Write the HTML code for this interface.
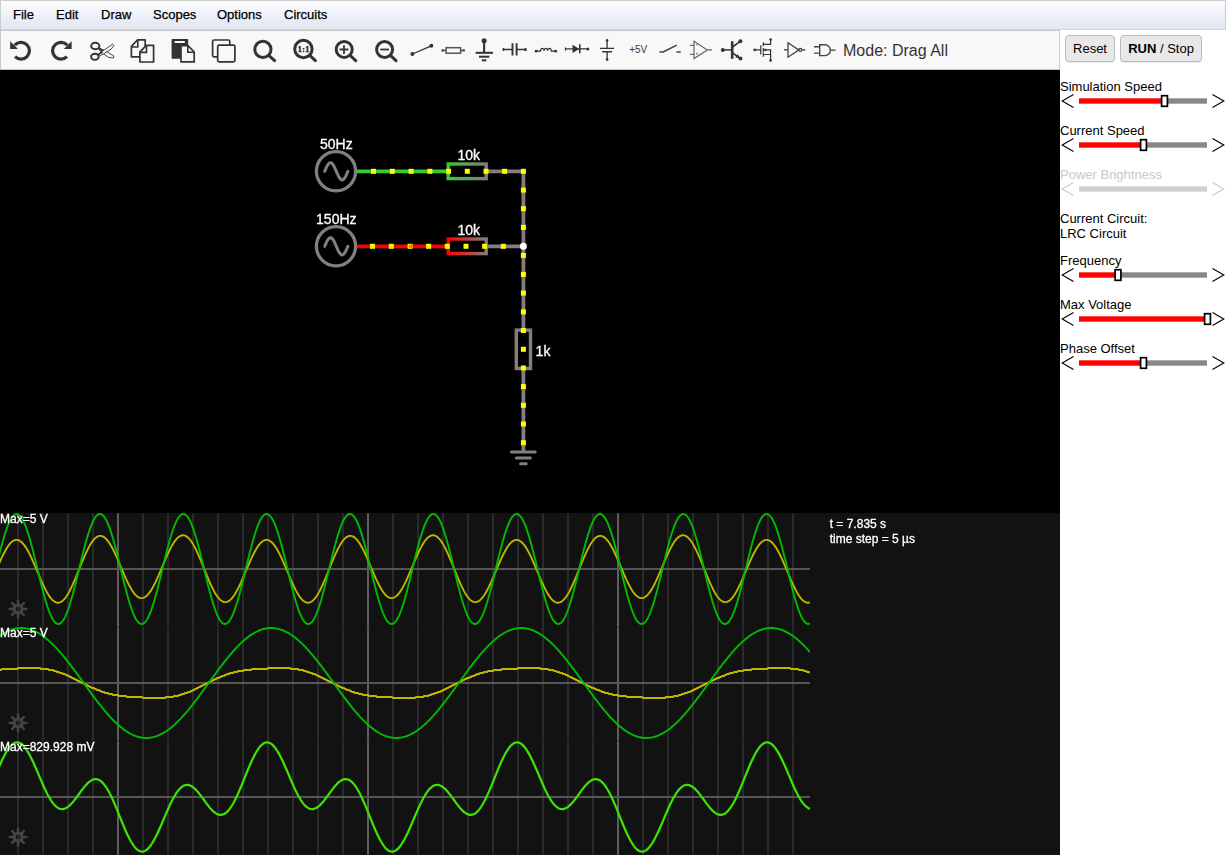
<!DOCTYPE html>
<html><head><meta charset="utf-8"><title>Circuit Simulator</title>
<style>
html,body{margin:0;padding:0;}
body{width:1226px;height:855px;overflow:hidden;background:#fff;position:relative;font-family:"Liberation Sans",Arial,sans-serif;font-size:13px;color:#000;}
.abs{position:absolute;}
#menubar{left:0;top:0;width:1224px;height:28px;border:1px solid #ccc;border-bottom-color:#d4d4d4;background:linear-gradient(#ffffff 0px,#f4f6fb 8px,#e6eaf4 22px,#e3e8f3 28px);}
.mi{position:absolute;top:7px;line-height:15px;font-size:13px;color:#000;white-space:nowrap;-webkit-text-stroke:0.25px #000;}
#toolbar{left:0;top:30px;width:1058px;height:38px;border:1px solid #c8c8c8;background:#f8f8f8;}
#tbsvg{left:0;top:30px;}
#mode{left:843px;top:42px;font-size:16px;line-height:18px;color:#333;white-space:nowrap;}
#cv{left:0;top:70px;will-change:transform;}
.btn{position:absolute;top:35px;height:25px;border:1px solid #bbb;border-radius:4px;background:#e8e8e8;font-size:13px;line-height:25px;text-align:center;color:#000;white-space:nowrap;box-shadow:0 1px 0 rgba(0,0,0,0.08);}
.lbl{position:absolute;left:1060px;font-size:13px;line-height:15px;white-space:nowrap;color:#000;}
.dis{color:#c8c8c8;}
</style></head><body>
<div id="menubar" class="abs"></div>
<div class="mi" style="left:13px">File</div>
<div class="mi" style="left:56px">Edit</div>
<div class="mi" style="left:101px">Draw</div>
<div class="mi" style="left:153px">Scopes</div>
<div class="mi" style="left:217px">Options</div>
<div class="mi" style="left:284px">Circuits</div>
<div id="toolbar" class="abs"></div>
<div id="mode" class="abs">Mode: Drag All</div>
<div class="btn" style="left:1065px;width:48px;">Reset</div>
<div class="btn" style="left:1120px;width:80px;"><b>RUN</b> / Stop</div>
<svg id="tbsvg" class="abs" width="1060" height="40" viewBox="0 30 1060 40">
<path d="M14.76 45.08 A8.4 8.4 0 1 1 15.06 56.64" fill="none" stroke="#333" stroke-width="3.2"/><path d="M10.2 41.3 L10.2 49.1 L18.0 49.1 Z" fill="#333"/>
<path d="M67.24 45.08 A8.4 8.4 0 1 0 66.94 56.64" fill="none" stroke="#333" stroke-width="3.2"/><path d="M71.6 41.3 L71.6 49.1 L63.8 49.1 Z" fill="#333"/>
<ellipse cx="95.3" cy="46" rx="4.1" ry="3.2" fill="none" stroke="#333" stroke-width="2"/><ellipse cx="94.9" cy="56.8" rx="3.8" ry="3" fill="none" stroke="#333" stroke-width="2"/><path d="M99 48 L104 50 L113.9 56.0 L113.6 58.0 L108.6 57.4 L100.4 51.6 Z" fill="#f8f8f8" stroke="#333" stroke-width="0.9" stroke-linejoin="round"/><path d="M98.4 54.4 L103.2 50.6 L112.6 44.2 L114.1 45.4 L111 49.2 L100.6 55.6 Z" fill="#f8f8f8" stroke="#333" stroke-width="0.9" stroke-linejoin="round"/><path d="M98.6 48.4 L103 51 M98.2 54.6 L102.5 52" stroke="#333" stroke-width="1.8"/>
<path d="M137.6 39.9 L145.2 39.9 L145.2 56.9 L131.4 56.9 L131.4 46.4 Z" fill="#f8f8f8" stroke="#333" stroke-width="1.7" stroke-linejoin="round"/><path d="M137.8 40.2 L137.8 47 L131.4 47" fill="none" stroke="#333" stroke-width="1.6"/><path d="M146.4 45.3 L153.6 45.3 L153.6 62 L139.9 62 L139.9 51.8 Z" fill="#f8f8f8" stroke="#333" stroke-width="1.7" stroke-linejoin="round"/><path d="M146.5 45.5 L146.5 52.4 L139.9 52.4" fill="none" stroke="#333" stroke-width="1.6"/>
<rect x="171.6" y="39" width="16.6" height="19.8" rx="0.8" fill="#333"/><rect x="174.6" y="41" width="10.2" height="2" fill="#f8f8f8"/><path d="M181 45.7 L188 45.7 L194.2 52 L194.2 61.9 L181 61.9 Z" fill="#f8f8f8" stroke="#333" stroke-width="1.7" stroke-linejoin="round"/><path d="M187.8 46 L187.8 52.2 L194 52.2" fill="none" stroke="#333" stroke-width="1.6"/>
<rect x="212.6" y="40" width="17.2" height="16.8" rx="1.6" fill="none" stroke="#333" stroke-width="1.7"/><rect x="217.7" y="45.2" width="17.2" height="16.6" rx="1.6" fill="#f8f8f8" stroke="#333" stroke-width="1.7"/>
<circle cx="262.9" cy="49.4" r="8.1" fill="none" stroke="#333" stroke-width="3"/><path d="M269.05 55.55 L274.6 60.6" stroke="#333" stroke-width="3" stroke-linecap="round"/>
<circle cx="303.4" cy="49.0" r="8.7" fill="none" stroke="#333" stroke-width="3"/><path d="M309.98 55.58 L315.4 60.6" stroke="#333" stroke-width="3" stroke-linecap="round"/><text x="303.4" y="52.2" font-family="Liberation Serif,serif" font-weight="bold" font-size="9" text-anchor="middle" fill="#222" stroke="#222" stroke-width="0.25">1:1</text>
<circle cx="344.2" cy="49.4" r="8.0" fill="none" stroke="#333" stroke-width="3"/><path d="M350.28 55.48 L355.7 60.6" stroke="#333" stroke-width="3" stroke-linecap="round"/><path d="M339.6 49.5 H348.4 M344 45.2 V53.9" stroke="#333" stroke-width="1.8"/>
<circle cx="384.6" cy="49.5" r="8.0" fill="none" stroke="#333" stroke-width="3"/><path d="M390.68 55.58 L396 60.6" stroke="#333" stroke-width="3" stroke-linecap="round"/><path d="M380.2 49.5 H389" stroke="#333" stroke-width="1.8"/>
<path d="M412.4 54 L431.3 45.8" stroke="#333" stroke-width="1.3"/><circle cx="412.4" cy="54" r="2" fill="#333"/><circle cx="431.3" cy="45.8" r="2" fill="#333"/>
<path d="M442.5 50.4 H446 M460.6 50.4 H463.8" stroke="#555" stroke-width="1.5"/><rect x="446.1" y="47.7" width="14.5" height="5.5" fill="none" stroke="#555" stroke-width="1.5"/><circle cx="442.6" cy="50.4" r="1.3" fill="#555"/><circle cx="463.7" cy="50.4" r="1.3" fill="#555"/>
<circle cx="484.1" cy="40.8" r="2.5" fill="#333"/><path d="M484.1 41 V52.6" stroke="#333" stroke-width="2.1"/><path d="M475.6 52.8 H493" stroke="#333" stroke-width="2"/><path d="M479 56.7 H489.4" stroke="#333" stroke-width="2"/><path d="M481.8 60.3 H486.4" stroke="#333" stroke-width="2"/>
<path d="M503.3 49.4 H512.4 M516.6 49.4 H525.4 M503.4 47.9 V50.9" stroke="#333" stroke-width="1.5"/><path d="M512.5 43.2 V55.6 M516.6 43.2 V55.6" stroke="#333" stroke-width="1.9"/><circle cx="525.5" cy="49.4" r="1.5" fill="#333"/>
<circle cx="536.1" cy="51.2" r="1.4" fill="#333"/><circle cx="555.7" cy="51.2" r="1.4" fill="#333"/><path d="M536.1 51.2 H540.5 Q540.7 48.4 542.3 48.4 Q543.9 48.4 544.1 50.6 Q544.3 48.4 545.9 48.4 Q547.5 48.4 547.7 50.6 Q547.9 48.4 549.5 48.4 Q551.1 48.4 551.3 51.2 H555.7" fill="none" stroke="#333" stroke-width="1.2"/>
<path d="M565.5 48.9 H587.6 M565.5 47.4 V50.4" stroke="#333" stroke-width="1.3"/><path d="M572.5 44.7 L579.3 48.9 L572.5 53.1 Z" fill="#333"/><path d="M579.8 44.3 V53.3" stroke="#333" stroke-width="1.6"/><circle cx="587.8" cy="48.9" r="1.5" fill="#333"/>
<path d="M607.1 40.3 V48.4 M607.1 51.7 V59.6" stroke="#333" stroke-width="1.3"/><path d="M600 48.4 H614.1 M602.2 51.7 H612" stroke="#333" stroke-width="1.4"/><circle cx="607.1" cy="40.4" r="1.3" fill="#333"/><circle cx="607.1" cy="59.6" r="1.3" fill="#333"/>
<text x="629.2" y="52.8" font-family="Liberation Sans,Arial,sans-serif" font-size="10" fill="#3a3a3a">+5V</text>
<path d="M659.4 52 H663.2 L676.8 45.2 M676.4 52 H680.8" fill="none" stroke="#444" stroke-width="1.5"/>
<path d="M694 41.2 L707.3 49.9 L694 58.6 Z M690 45.3 H694 M690 54.3 H694 M707.3 49.9 H712" fill="none" stroke="#666" stroke-width="1.2"/><path d="M696 44.8 H697.6 M696 53.6 H697.8 M696.9 52.7 V54.5" stroke="#555" stroke-width="0.7"/>
<circle cx="722.8" cy="49.9" r="2" fill="#333"/><path d="M722.8 49.9 H732" stroke="#333" stroke-width="1.5"/><path d="M732.2 41.2 V58.8" stroke="#333" stroke-width="2.6"/><path d="M732.6 47 L740.4 41.2 M732.6 52.8 L740.4 58.6" stroke="#333" stroke-width="1.6"/><circle cx="740.4" cy="41.2" r="2" fill="#333"/><circle cx="740.4" cy="58.6" r="2" fill="#333"/><path d="M739.4 57.9 L735.2 57.4 L737.8 53.9 Z" fill="#333"/>
<circle cx="754.7" cy="49.9" r="1.3" fill="#333"/><circle cx="770.6" cy="39.5" r="1.3" fill="#333"/><circle cx="770.6" cy="60.4" r="1.3" fill="#333"/><path d="M754.7 49.9 H760.8 M760.8 45.3 V54.5 M763.3 42.3 V46.3 M763.3 47.9 V51.9 M763.3 52.6 V56.8 M763.3 44.3 H770.6 V39.5 M763.3 54.5 H770.6 V60.4 M763.3 49.9 H770.6 V54.5" fill="none" stroke="#333" stroke-width="1.2"/><path d="M763.4 49.9 L766.2 48.3 L766.2 51.5 Z" fill="#333"/>
<path d="M784 49.9 H788 M788 42.8 L798.8 49.9 L788 57.2 Z M801.8 49.9 H805.4" fill="none" stroke="#333" stroke-width="1.2"/><circle cx="800.3" cy="49.9" r="1.5" fill="none" stroke="#333" stroke-width="1.1"/>
<path d="M814 46.8 H819.6 M814 53.1 H819.6 M819.7 44.8 H825 A5.4 5.4 0 0 1 825 55.6 H819.7 Z M830.4 50.1 H835.6" fill="none" stroke="#444" stroke-width="1.4"/>
</svg>
<svg id="cv" class="abs" width="1060" height="785" viewBox="0 70 1060 785">
<defs><linearGradient id="gg" x1="448" x2="486" y1="0" y2="0" gradientUnits="userSpaceOnUse"><stop offset="0" stop-color="#33cc33"/><stop offset="1" stop-color="#857c7c"/></linearGradient><linearGradient id="gr" x1="448" x2="486" y1="0" y2="0" gradientUnits="userSpaceOnUse"><stop offset="0" stop-color="#ff0000"/><stop offset="1" stop-color="#857c7c"/></linearGradient><clipPath id="c0"><rect x="0" y="513" width="810" height="114"/></clipPath><clipPath id="c1"><rect x="0" y="627" width="810" height="114"/></clipPath><clipPath id="c2"><rect x="0" y="741" width="810" height="114"/></clipPath></defs>
<rect x="0" y="70" width="1060" height="443" fill="#000"/>
<rect x="0" y="513" width="1060" height="342" fill="#121212"/>
<circle cx="336" cy="171.3" r="19.6" fill="none" stroke="#808080" stroke-width="3.3"/><polyline points="324.7,171.3 325.3,170.0 325.9,168.6 326.4,167.4 327.0,166.2 327.6,165.2 328.2,164.3 328.8,163.6 329.3,163.1 329.9,162.8 330.5,162.7 331.1,162.8 331.7,163.1 332.2,163.6 332.8,164.3 333.4,165.2 334.0,166.2 334.6,167.4 335.1,168.6 335.7,170.0 336.3,171.3 336.9,172.6 337.5,174.0 338.0,175.2 338.6,176.4 339.2,177.4 339.8,178.3 340.4,179.0 340.9,179.5 341.5,179.8 342.1,179.9 342.7,179.8 343.3,179.5 343.8,179.0 344.4,178.3 345.0,177.4 345.6,176.4 346.2,175.2 346.7,174.0 347.3,172.6 347.9,171.3" fill="none" stroke="#808080" stroke-width="3" stroke-linecap="round" stroke-linejoin="round"/><text x="336.3" y="148.7" font-family="Liberation Sans,Arial,sans-serif" stroke="#fff" stroke-width="0.3" font-size="14" fill="#fff" text-anchor="middle">50Hz</text><path d="M356.8 171.3 H448" stroke="#33cc33" stroke-width="3.8"/><rect x="448.2" y="164.0" width="38" height="14.6" fill="none" stroke="url(#gg)" stroke-width="3.4"/><path d="M487.8 171.3 H523.4" stroke="#857c7c" stroke-width="3.8"/><text x="468.7" y="159.9" font-family="Liberation Sans,Arial,sans-serif" stroke="#fff" stroke-width="0.3" font-size="14" fill="#fff" text-anchor="middle">10k</text>
<circle cx="336" cy="246.3" r="19.6" fill="none" stroke="#808080" stroke-width="3.3"/><polyline points="324.7,246.3 325.3,245.0 325.9,243.6 326.4,242.4 327.0,241.2 327.6,240.2 328.2,239.3 328.8,238.6 329.3,238.1 329.9,237.8 330.5,237.7 331.1,237.8 331.7,238.1 332.2,238.6 332.8,239.3 333.4,240.2 334.0,241.2 334.6,242.4 335.1,243.6 335.7,245.0 336.3,246.3 336.9,247.6 337.5,249.0 338.0,250.2 338.6,251.4 339.2,252.4 339.8,253.3 340.4,254.0 340.9,254.5 341.5,254.8 342.1,254.9 342.7,254.8 343.3,254.5 343.8,254.0 344.4,253.3 345.0,252.4 345.6,251.4 346.2,250.2 346.7,249.0 347.3,247.6 347.9,246.3" fill="none" stroke="#808080" stroke-width="3" stroke-linecap="round" stroke-linejoin="round"/><text x="336.3" y="223.7" font-family="Liberation Sans,Arial,sans-serif" stroke="#fff" stroke-width="0.3" font-size="14" fill="#fff" text-anchor="middle">150Hz</text><path d="M356.8 246.3 H448" stroke="#ff0000" stroke-width="3.8"/><rect x="448.2" y="239.0" width="38" height="14.6" fill="none" stroke="url(#gr)" stroke-width="3.4"/><path d="M487.8 246.3 H523.4" stroke="#857c7c" stroke-width="3.8"/><text x="468.7" y="234.9" font-family="Liberation Sans,Arial,sans-serif" stroke="#fff" stroke-width="0.3" font-size="14" fill="#fff" text-anchor="middle">10k</text>
<path d="M523.4 169.3 V330" stroke="#857c7c" stroke-width="3.8"/><rect x="516.3" y="330.1" width="14.2" height="38.4" fill="none" stroke="#857c7c" stroke-width="3.4"/><path d="M523.4 370 V452" stroke="#808080" stroke-width="3.8"/><path d="M511.4 452 H535.2 M516.4 458.1 H530.4 M520.6 463.8 H526.2" stroke="#808080" stroke-width="3" stroke-linecap="round"/><text x="535.6" y="355.8" font-family="Liberation Sans,Arial,sans-serif" stroke="#fff" stroke-width="0.3" font-size="14" fill="#fff">1k</text>
<rect x="371.0" y="168.8" width="5" height="5" fill="#ffff00"/><rect x="389.8" y="168.8" width="5" height="5" fill="#ffff00"/><rect x="408.6" y="168.8" width="5" height="5" fill="#ffff00"/><rect x="427.4" y="168.8" width="5" height="5" fill="#ffff00"/><rect x="446.1" y="168.8" width="5" height="5" fill="#ffff00"/><rect x="464.8" y="168.8" width="5" height="5" fill="#ffff00"/><rect x="483.5" y="168.8" width="5" height="5" fill="#ffff00"/><rect x="502.1" y="168.8" width="5" height="5" fill="#ffff00"/><rect x="520.9" y="168.8" width="5" height="5" fill="#ffff00"/><rect x="370.0" y="243.8" width="5" height="5" fill="#ffff00"/><rect x="388.8" y="243.8" width="5" height="5" fill="#ffff00"/><rect x="407.6" y="243.8" width="5" height="5" fill="#ffff00"/><rect x="426.1" y="243.8" width="5" height="5" fill="#ffff00"/><rect x="444.8" y="243.8" width="5" height="5" fill="#ffff00"/><rect x="463.5" y="243.8" width="5" height="5" fill="#ffff00"/><rect x="482.1" y="243.8" width="5" height="5" fill="#ffff00"/><rect x="500.8" y="243.8" width="5" height="5" fill="#ffff00"/><rect x="520.9" y="187.6" width="5" height="5" fill="#ffff00"/><rect x="520.9" y="206.2" width="5" height="5" fill="#ffff00"/><rect x="520.9" y="224.9" width="5" height="5" fill="#ffff00"/><rect x="520.9" y="252.9" width="5" height="5" fill="#ffff00"/><rect x="520.9" y="271.9" width="5" height="5" fill="#ffff00"/><rect x="520.9" y="290.6" width="5" height="5" fill="#ffff00"/><rect x="520.9" y="309.4" width="5" height="5" fill="#ffff00"/><rect x="520.9" y="328.0" width="5" height="5" fill="#ffff00"/><rect x="520.9" y="346.8" width="5" height="5" fill="#ffff00"/><rect x="520.9" y="365.5" width="5" height="5" fill="#ffff00"/><rect x="520.9" y="384.1" width="5" height="5" fill="#ffff00"/><rect x="520.9" y="402.8" width="5" height="5" fill="#ffff00"/><rect x="520.9" y="421.5" width="5" height="5" fill="#ffff00"/><rect x="520.9" y="440.2" width="5" height="5" fill="#ffff00"/><circle cx="410.6" cy="246.3" r="1.3" fill="none" stroke="#ff0000" stroke-width="0.9"/><circle cx="523.4" cy="246.3" r="3.5" fill="#fff"/>
<rect x="17" y="513.3" width="2" height="113.4" fill="#2a2a2a"/><rect x="42" y="513.3" width="2" height="113.4" fill="#2a2a2a"/><rect x="67" y="513.3" width="2" height="113.4" fill="#2a2a2a"/><rect x="92" y="513.3" width="2" height="113.4" fill="#2a2a2a"/><rect x="117" y="513.3" width="2" height="113.4" fill="#5e5e5e"/><rect x="142" y="513.3" width="2" height="113.4" fill="#2a2a2a"/><rect x="167" y="513.3" width="2" height="113.4" fill="#2a2a2a"/><rect x="192" y="513.3" width="2" height="113.4" fill="#2a2a2a"/><rect x="217" y="513.3" width="2" height="113.4" fill="#2a2a2a"/><rect x="242" y="513.3" width="2" height="113.4" fill="#2a2a2a"/><rect x="267" y="513.3" width="2" height="113.4" fill="#2a2a2a"/><rect x="292" y="513.3" width="2" height="113.4" fill="#2a2a2a"/><rect x="317" y="513.3" width="2" height="113.4" fill="#2a2a2a"/><rect x="342" y="513.3" width="2" height="113.4" fill="#2a2a2a"/><rect x="367" y="513.3" width="2" height="113.4" fill="#5e5e5e"/><rect x="392" y="513.3" width="2" height="113.4" fill="#2a2a2a"/><rect x="417" y="513.3" width="2" height="113.4" fill="#2a2a2a"/><rect x="442" y="513.3" width="2" height="113.4" fill="#2a2a2a"/><rect x="467" y="513.3" width="2" height="113.4" fill="#2a2a2a"/><rect x="492" y="513.3" width="2" height="113.4" fill="#2a2a2a"/><rect x="517" y="513.3" width="2" height="113.4" fill="#2a2a2a"/><rect x="542" y="513.3" width="2" height="113.4" fill="#2a2a2a"/><rect x="567" y="513.3" width="2" height="113.4" fill="#2a2a2a"/><rect x="592" y="513.3" width="2" height="113.4" fill="#2a2a2a"/><rect x="617" y="513.3" width="2" height="113.4" fill="#5e5e5e"/><rect x="642" y="513.3" width="2" height="113.4" fill="#2a2a2a"/><rect x="667" y="513.3" width="2" height="113.4" fill="#2a2a2a"/><rect x="692" y="513.3" width="2" height="113.4" fill="#2a2a2a"/><rect x="717" y="513.3" width="2" height="113.4" fill="#2a2a2a"/><rect x="742" y="513.3" width="2" height="113.4" fill="#2a2a2a"/><rect x="767" y="513.3" width="2" height="113.4" fill="#2a2a2a"/><rect x="792" y="513.3" width="2" height="113.4" fill="#2a2a2a"/><rect x="0" y="568" width="810" height="2" fill="#555"/>
<rect x="17" y="627.3" width="2" height="113.4" fill="#2a2a2a"/><rect x="42" y="627.3" width="2" height="113.4" fill="#2a2a2a"/><rect x="67" y="627.3" width="2" height="113.4" fill="#2a2a2a"/><rect x="92" y="627.3" width="2" height="113.4" fill="#2a2a2a"/><rect x="117" y="627.3" width="2" height="113.4" fill="#5e5e5e"/><rect x="142" y="627.3" width="2" height="113.4" fill="#2a2a2a"/><rect x="167" y="627.3" width="2" height="113.4" fill="#2a2a2a"/><rect x="192" y="627.3" width="2" height="113.4" fill="#2a2a2a"/><rect x="217" y="627.3" width="2" height="113.4" fill="#2a2a2a"/><rect x="242" y="627.3" width="2" height="113.4" fill="#2a2a2a"/><rect x="267" y="627.3" width="2" height="113.4" fill="#2a2a2a"/><rect x="292" y="627.3" width="2" height="113.4" fill="#2a2a2a"/><rect x="317" y="627.3" width="2" height="113.4" fill="#2a2a2a"/><rect x="342" y="627.3" width="2" height="113.4" fill="#2a2a2a"/><rect x="367" y="627.3" width="2" height="113.4" fill="#5e5e5e"/><rect x="392" y="627.3" width="2" height="113.4" fill="#2a2a2a"/><rect x="417" y="627.3" width="2" height="113.4" fill="#2a2a2a"/><rect x="442" y="627.3" width="2" height="113.4" fill="#2a2a2a"/><rect x="467" y="627.3" width="2" height="113.4" fill="#2a2a2a"/><rect x="492" y="627.3" width="2" height="113.4" fill="#2a2a2a"/><rect x="517" y="627.3" width="2" height="113.4" fill="#2a2a2a"/><rect x="542" y="627.3" width="2" height="113.4" fill="#2a2a2a"/><rect x="567" y="627.3" width="2" height="113.4" fill="#2a2a2a"/><rect x="592" y="627.3" width="2" height="113.4" fill="#2a2a2a"/><rect x="617" y="627.3" width="2" height="113.4" fill="#5e5e5e"/><rect x="642" y="627.3" width="2" height="113.4" fill="#2a2a2a"/><rect x="667" y="627.3" width="2" height="113.4" fill="#2a2a2a"/><rect x="692" y="627.3" width="2" height="113.4" fill="#2a2a2a"/><rect x="717" y="627.3" width="2" height="113.4" fill="#2a2a2a"/><rect x="742" y="627.3" width="2" height="113.4" fill="#2a2a2a"/><rect x="767" y="627.3" width="2" height="113.4" fill="#2a2a2a"/><rect x="792" y="627.3" width="2" height="113.4" fill="#2a2a2a"/><rect x="0" y="682" width="810" height="2" fill="#555"/>
<rect x="17" y="741.3" width="2" height="113.4" fill="#2a2a2a"/><rect x="42" y="741.3" width="2" height="113.4" fill="#2a2a2a"/><rect x="67" y="741.3" width="2" height="113.4" fill="#2a2a2a"/><rect x="92" y="741.3" width="2" height="113.4" fill="#2a2a2a"/><rect x="117" y="741.3" width="2" height="113.4" fill="#5e5e5e"/><rect x="142" y="741.3" width="2" height="113.4" fill="#2a2a2a"/><rect x="167" y="741.3" width="2" height="113.4" fill="#2a2a2a"/><rect x="192" y="741.3" width="2" height="113.4" fill="#2a2a2a"/><rect x="217" y="741.3" width="2" height="113.4" fill="#2a2a2a"/><rect x="242" y="741.3" width="2" height="113.4" fill="#2a2a2a"/><rect x="267" y="741.3" width="2" height="113.4" fill="#2a2a2a"/><rect x="292" y="741.3" width="2" height="113.4" fill="#2a2a2a"/><rect x="317" y="741.3" width="2" height="113.4" fill="#2a2a2a"/><rect x="342" y="741.3" width="2" height="113.4" fill="#2a2a2a"/><rect x="367" y="741.3" width="2" height="113.4" fill="#5e5e5e"/><rect x="392" y="741.3" width="2" height="113.4" fill="#2a2a2a"/><rect x="417" y="741.3" width="2" height="113.4" fill="#2a2a2a"/><rect x="442" y="741.3" width="2" height="113.4" fill="#2a2a2a"/><rect x="467" y="741.3" width="2" height="113.4" fill="#2a2a2a"/><rect x="492" y="741.3" width="2" height="113.4" fill="#2a2a2a"/><rect x="517" y="741.3" width="2" height="113.4" fill="#2a2a2a"/><rect x="542" y="741.3" width="2" height="113.4" fill="#2a2a2a"/><rect x="567" y="741.3" width="2" height="113.4" fill="#2a2a2a"/><rect x="592" y="741.3" width="2" height="113.4" fill="#2a2a2a"/><rect x="617" y="741.3" width="2" height="113.4" fill="#5e5e5e"/><rect x="642" y="741.3" width="2" height="113.4" fill="#2a2a2a"/><rect x="667" y="741.3" width="2" height="113.4" fill="#2a2a2a"/><rect x="692" y="741.3" width="2" height="113.4" fill="#2a2a2a"/><rect x="717" y="741.3" width="2" height="113.4" fill="#2a2a2a"/><rect x="742" y="741.3" width="2" height="113.4" fill="#2a2a2a"/><rect x="767" y="741.3" width="2" height="113.4" fill="#2a2a2a"/><rect x="792" y="741.3" width="2" height="113.4" fill="#2a2a2a"/><rect x="0" y="796" width="810" height="2" fill="#555"/>
<polyline clip-path="url(#c0)" points="-1.0,563.7 0.0,561.5 1.0,559.2 2.0,557.1 3.0,555.0 4.0,553.0 5.0,551.2 6.0,549.4 7.0,547.8 8.0,546.3 9.0,544.9 10.0,543.7 11.0,542.6 12.0,541.7 13.0,541.0 14.0,540.5 15.0,540.1 16.0,539.9 17.0,539.9 18.0,540.1 19.0,540.4 20.0,541.0 21.0,541.7 22.0,542.5 23.0,543.6 24.0,544.8 25.0,546.1 26.0,547.6 27.0,549.2 28.0,551.0 29.0,552.9 30.0,554.8 31.0,556.9 32.0,559.1 33.0,561.3 34.0,563.6 35.0,565.9 36.0,568.3 37.0,570.6 38.0,573.0 39.0,575.4 40.0,577.7 41.0,580.1 42.0,582.3 43.0,584.5 44.0,586.6 45.0,588.7 46.0,590.6 47.0,592.4 48.0,594.1 49.0,595.7 50.0,597.2 51.0,598.4 52.0,599.6 53.0,600.5 54.0,601.3 55.0,601.9 56.0,602.4 57.0,602.7 58.0,602.7 59.0,602.6 60.0,602.4 61.0,601.9 62.0,601.2 63.0,600.4 64.0,599.4 65.0,598.3 66.0,597.0 67.0,595.5 68.0,593.9 69.0,592.1 70.0,590.2 71.0,588.3 72.0,586.2 73.0,584.0 74.0,581.7 75.0,579.4 76.0,577.0 77.0,574.5 78.0,572.1 79.0,569.6 80.0,567.1 81.0,564.6 82.0,562.2 83.0,559.8 84.0,557.4 85.0,555.1 86.0,552.9 87.0,550.8 88.0,548.8 89.0,546.9 90.0,545.1 91.0,543.5 92.0,542.0 93.0,540.6 94.0,539.4 95.0,538.4 96.0,537.5 97.0,536.8 98.0,536.3 99.0,536.0 100.0,535.9 101.0,535.9 102.0,536.1 103.0,536.5 104.0,537.1 105.0,537.8 106.0,538.8 107.0,539.8 108.0,541.1 109.0,542.5 110.0,544.0 111.0,545.7 112.0,547.5 113.0,549.4 114.0,551.4 115.0,553.5 116.0,555.6 117.0,557.9 118.0,560.2 119.0,562.5 120.0,564.9 121.0,567.2 122.0,569.6 123.0,571.9 124.0,574.3 125.0,576.5 126.0,578.8 127.0,580.9 128.0,583.0 129.0,585.0 130.0,586.8 131.0,588.6 132.0,590.2 133.0,591.7 134.0,593.1 135.0,594.3 136.0,595.4 137.0,596.3 138.0,597.0 139.0,597.5 140.0,597.9 141.0,598.1 142.0,598.1 143.0,597.9 144.0,597.6 145.0,597.0 146.0,596.3 147.0,595.5 148.0,594.4 149.0,593.2 150.0,591.9 151.0,590.4 152.0,588.8 153.0,587.0 154.0,585.1 155.0,583.2 156.0,581.1 157.0,578.9 158.0,576.7 159.0,574.4 160.0,572.1 161.0,569.7 162.0,567.4 163.0,565.0 164.0,562.6 165.0,560.3 166.0,557.9 167.0,555.7 168.0,553.5 169.0,551.4 170.0,549.3 171.0,547.4 172.0,545.6 173.0,543.9 174.0,542.3 175.0,540.8 176.0,539.6 177.0,538.4 178.0,537.5 179.0,536.7 180.0,536.1 181.0,535.6 182.0,535.3 183.0,535.3 184.0,535.4 185.0,535.6 186.0,536.1 187.0,536.8 188.0,537.6 189.0,538.6 190.0,539.7 191.0,541.0 192.0,542.5 193.0,544.1 194.0,545.9 195.0,547.8 196.0,549.7 197.0,551.8 198.0,554.0 199.0,556.3 200.0,558.6 201.0,561.0 202.0,563.5 203.0,565.9 204.0,568.4 205.0,570.9 206.0,573.4 207.0,575.8 208.0,578.2 209.0,580.6 210.0,582.9 211.0,585.1 212.0,587.2 213.0,589.2 214.0,591.1 215.0,592.9 216.0,594.5 217.0,596.0 218.0,597.4 219.0,598.6 220.0,599.6 221.0,600.5 222.0,601.2 223.0,601.7 224.0,602.0 225.0,602.1 226.0,602.1 227.0,601.9 228.0,601.5 229.0,600.9 230.0,600.2 231.0,599.2 232.0,598.2 233.0,596.9 234.0,595.5 235.0,594.0 236.0,592.3 237.0,590.5 238.0,588.6 239.0,586.6 240.0,584.5 241.0,582.4 242.0,580.1 243.0,577.8 244.0,575.5 245.0,573.1 246.0,570.8 247.0,568.4 248.0,566.1 249.0,563.7 250.0,561.5 251.0,559.2 252.0,557.1 253.0,555.0 254.0,553.0 255.0,551.2 256.0,549.4 257.0,547.8 258.0,546.3 259.0,544.9 260.0,543.7 261.0,542.6 262.0,541.7 263.0,541.0 264.0,540.5 265.0,540.1 266.0,539.9 267.0,539.9 268.0,540.1 269.0,540.4 270.0,541.0 271.0,541.7 272.0,542.5 273.0,543.6 274.0,544.8 275.0,546.1 276.0,547.6 277.0,549.2 278.0,551.0 279.0,552.9 280.0,554.8 281.0,556.9 282.0,559.1 283.0,561.3 284.0,563.6 285.0,565.9 286.0,568.3 287.0,570.6 288.0,573.0 289.0,575.4 290.0,577.7 291.0,580.1 292.0,582.3 293.0,584.5 294.0,586.6 295.0,588.7 296.0,590.6 297.0,592.4 298.0,594.1 299.0,595.7 300.0,597.2 301.0,598.4 302.0,599.6 303.0,600.5 304.0,601.3 305.0,601.9 306.0,602.4 307.0,602.7 308.0,602.7 309.0,602.6 310.0,602.4 311.0,601.9 312.0,601.2 313.0,600.4 314.0,599.4 315.0,598.3 316.0,597.0 317.0,595.5 318.0,593.9 319.0,592.1 320.0,590.2 321.0,588.3 322.0,586.2 323.0,584.0 324.0,581.7 325.0,579.4 326.0,577.0 327.0,574.5 328.0,572.1 329.0,569.6 330.0,567.1 331.0,564.6 332.0,562.2 333.0,559.8 334.0,557.4 335.0,555.1 336.0,552.9 337.0,550.8 338.0,548.8 339.0,546.9 340.0,545.1 341.0,543.5 342.0,542.0 343.0,540.6 344.0,539.4 345.0,538.4 346.0,537.5 347.0,536.8 348.0,536.3 349.0,536.0 350.0,535.9 351.0,535.9 352.0,536.1 353.0,536.5 354.0,537.1 355.0,537.8 356.0,538.8 357.0,539.8 358.0,541.1 359.0,542.5 360.0,544.0 361.0,545.7 362.0,547.5 363.0,549.4 364.0,551.4 365.0,553.5 366.0,555.6 367.0,557.9 368.0,560.2 369.0,562.5 370.0,564.9 371.0,567.2 372.0,569.6 373.0,571.9 374.0,574.3 375.0,576.5 376.0,578.8 377.0,580.9 378.0,583.0 379.0,585.0 380.0,586.8 381.0,588.6 382.0,590.2 383.0,591.7 384.0,593.1 385.0,594.3 386.0,595.4 387.0,596.3 388.0,597.0 389.0,597.5 390.0,597.9 391.0,598.1 392.0,598.1 393.0,597.9 394.0,597.6 395.0,597.0 396.0,596.3 397.0,595.5 398.0,594.4 399.0,593.2 400.0,591.9 401.0,590.4 402.0,588.8 403.0,587.0 404.0,585.1 405.0,583.2 406.0,581.1 407.0,578.9 408.0,576.7 409.0,574.4 410.0,572.1 411.0,569.7 412.0,567.4 413.0,565.0 414.0,562.6 415.0,560.3 416.0,557.9 417.0,555.7 418.0,553.5 419.0,551.4 420.0,549.3 421.0,547.4 422.0,545.6 423.0,543.9 424.0,542.3 425.0,540.8 426.0,539.6 427.0,538.4 428.0,537.5 429.0,536.7 430.0,536.1 431.0,535.6 432.0,535.3 433.0,535.3 434.0,535.4 435.0,535.6 436.0,536.1 437.0,536.8 438.0,537.6 439.0,538.6 440.0,539.7 441.0,541.0 442.0,542.5 443.0,544.1 444.0,545.9 445.0,547.8 446.0,549.7 447.0,551.8 448.0,554.0 449.0,556.3 450.0,558.6 451.0,561.0 452.0,563.5 453.0,565.9 454.0,568.4 455.0,570.9 456.0,573.4 457.0,575.8 458.0,578.2 459.0,580.6 460.0,582.9 461.0,585.1 462.0,587.2 463.0,589.2 464.0,591.1 465.0,592.9 466.0,594.5 467.0,596.0 468.0,597.4 469.0,598.6 470.0,599.6 471.0,600.5 472.0,601.2 473.0,601.7 474.0,602.0 475.0,602.1 476.0,602.1 477.0,601.9 478.0,601.5 479.0,600.9 480.0,600.2 481.0,599.2 482.0,598.2 483.0,596.9 484.0,595.5 485.0,594.0 486.0,592.3 487.0,590.5 488.0,588.6 489.0,586.6 490.0,584.5 491.0,582.4 492.0,580.1 493.0,577.8 494.0,575.5 495.0,573.1 496.0,570.8 497.0,568.4 498.0,566.1 499.0,563.7 500.0,561.5 501.0,559.2 502.0,557.1 503.0,555.0 504.0,553.0 505.0,551.2 506.0,549.4 507.0,547.8 508.0,546.3 509.0,544.9 510.0,543.7 511.0,542.6 512.0,541.7 513.0,541.0 514.0,540.5 515.0,540.1 516.0,539.9 517.0,539.9 518.0,540.1 519.0,540.4 520.0,541.0 521.0,541.7 522.0,542.5 523.0,543.6 524.0,544.8 525.0,546.1 526.0,547.6 527.0,549.2 528.0,551.0 529.0,552.9 530.0,554.8 531.0,556.9 532.0,559.1 533.0,561.3 534.0,563.6 535.0,565.9 536.0,568.3 537.0,570.6 538.0,573.0 539.0,575.4 540.0,577.7 541.0,580.1 542.0,582.3 543.0,584.5 544.0,586.6 545.0,588.7 546.0,590.6 547.0,592.4 548.0,594.1 549.0,595.7 550.0,597.2 551.0,598.4 552.0,599.6 553.0,600.5 554.0,601.3 555.0,601.9 556.0,602.4 557.0,602.7 558.0,602.7 559.0,602.6 560.0,602.4 561.0,601.9 562.0,601.2 563.0,600.4 564.0,599.4 565.0,598.3 566.0,597.0 567.0,595.5 568.0,593.9 569.0,592.1 570.0,590.2 571.0,588.3 572.0,586.2 573.0,584.0 574.0,581.7 575.0,579.4 576.0,577.0 577.0,574.5 578.0,572.1 579.0,569.6 580.0,567.1 581.0,564.6 582.0,562.2 583.0,559.8 584.0,557.4 585.0,555.1 586.0,552.9 587.0,550.8 588.0,548.8 589.0,546.9 590.0,545.1 591.0,543.5 592.0,542.0 593.0,540.6 594.0,539.4 595.0,538.4 596.0,537.5 597.0,536.8 598.0,536.3 599.0,536.0 600.0,535.9 601.0,535.9 602.0,536.1 603.0,536.5 604.0,537.1 605.0,537.8 606.0,538.8 607.0,539.8 608.0,541.1 609.0,542.5 610.0,544.0 611.0,545.7 612.0,547.5 613.0,549.4 614.0,551.4 615.0,553.5 616.0,555.6 617.0,557.9 618.0,560.2 619.0,562.5 620.0,564.9 621.0,567.2 622.0,569.6 623.0,571.9 624.0,574.3 625.0,576.5 626.0,578.8 627.0,580.9 628.0,583.0 629.0,585.0 630.0,586.8 631.0,588.6 632.0,590.2 633.0,591.7 634.0,593.1 635.0,594.3 636.0,595.4 637.0,596.3 638.0,597.0 639.0,597.5 640.0,597.9 641.0,598.1 642.0,598.1 643.0,597.9 644.0,597.6 645.0,597.0 646.0,596.3 647.0,595.5 648.0,594.4 649.0,593.2 650.0,591.9 651.0,590.4 652.0,588.8 653.0,587.0 654.0,585.1 655.0,583.2 656.0,581.1 657.0,578.9 658.0,576.7 659.0,574.4 660.0,572.1 661.0,569.7 662.0,567.4 663.0,565.0 664.0,562.6 665.0,560.3 666.0,557.9 667.0,555.7 668.0,553.5 669.0,551.4 670.0,549.3 671.0,547.4 672.0,545.6 673.0,543.9 674.0,542.3 675.0,540.8 676.0,539.6 677.0,538.4 678.0,537.5 679.0,536.7 680.0,536.1 681.0,535.6 682.0,535.3 683.0,535.3 684.0,535.4 685.0,535.6 686.0,536.1 687.0,536.8 688.0,537.6 689.0,538.6 690.0,539.7 691.0,541.0 692.0,542.5 693.0,544.1 694.0,545.9 695.0,547.8 696.0,549.7 697.0,551.8 698.0,554.0 699.0,556.3 700.0,558.6 701.0,561.0 702.0,563.5 703.0,565.9 704.0,568.4 705.0,570.9 706.0,573.4 707.0,575.8 708.0,578.2 709.0,580.6 710.0,582.9 711.0,585.1 712.0,587.2 713.0,589.2 714.0,591.1 715.0,592.9 716.0,594.5 717.0,596.0 718.0,597.4 719.0,598.6 720.0,599.6 721.0,600.5 722.0,601.2 723.0,601.7 724.0,602.0 725.0,602.1 726.0,602.1 727.0,601.9 728.0,601.5 729.0,600.9 730.0,600.2 731.0,599.2 732.0,598.2 733.0,596.9 734.0,595.5 735.0,594.0 736.0,592.3 737.0,590.5 738.0,588.6 739.0,586.6 740.0,584.5 741.0,582.4 742.0,580.1 743.0,577.8 744.0,575.5 745.0,573.1 746.0,570.8 747.0,568.4 748.0,566.1 749.0,563.7 750.0,561.5 751.0,559.2 752.0,557.1 753.0,555.0 754.0,553.0 755.0,551.2 756.0,549.4 757.0,547.8 758.0,546.3 759.0,544.9 760.0,543.7 761.0,542.6 762.0,541.7 763.0,541.0 764.0,540.5 765.0,540.1 766.0,539.9 767.0,539.9 768.0,540.1 769.0,540.4 770.0,541.0 771.0,541.7 772.0,542.5 773.0,543.6 774.0,544.8 775.0,546.1 776.0,547.6 777.0,549.2 778.0,551.0 779.0,552.9 780.0,554.8 781.0,556.9 782.0,559.1 783.0,561.3 784.0,563.6 785.0,565.9 786.0,568.3 787.0,570.6 788.0,573.0 789.0,575.4 790.0,577.7 791.0,580.1 792.0,582.3 793.0,584.5 794.0,586.6 795.0,588.7 796.0,590.6 797.0,592.4 798.0,594.1 799.0,595.7 800.0,597.2 801.0,598.4 802.0,599.6 803.0,600.5 804.0,601.3 805.0,601.9 806.0,602.4 807.0,602.7 808.0,602.7 809.0,602.6 810.0,602.4" fill="none" stroke="#beb600" stroke-width="1.9" stroke-linejoin="round"/>
<polyline clip-path="url(#c0)" points="-1.0,555.7 0.0,551.7 1.0,547.9 2.0,544.1 3.0,540.5 4.0,537.0 5.0,533.7 6.0,530.7 7.0,527.8 8.0,525.2 9.0,522.8 10.0,520.7 11.0,518.8 12.0,517.3 13.0,516.0 14.0,515.1 15.0,514.4 16.0,514.1 17.0,514.0 18.0,514.3 19.0,514.9 20.0,515.8 21.0,517.0 22.0,518.5 23.0,520.3 24.0,522.3 25.0,524.7 26.0,527.2 27.0,530.1 28.0,533.1 29.0,536.3 30.0,539.8 31.0,543.4 32.0,547.1 33.0,551.0 34.0,554.9 35.0,559.0 36.0,563.1 37.0,567.2 38.0,571.3 39.0,575.5 40.0,579.6 41.0,583.6 42.0,587.6 43.0,591.4 44.0,595.1 45.0,598.7 46.0,602.1 47.0,605.3 48.0,608.3 49.0,611.1 50.0,613.7 51.0,615.9 52.0,618.0 53.0,619.7 54.0,621.2 55.0,622.3 56.0,623.2 57.0,623.7 58.0,624.0 59.0,623.9 60.0,623.5 61.0,622.8 62.0,621.8 63.0,620.5 64.0,618.9 65.0,617.1 66.0,614.9 67.0,612.5 68.0,609.8 69.0,607.0 70.0,603.8 71.0,600.5 72.0,597.1 73.0,593.4 74.0,589.6 75.0,585.7 76.0,581.7 77.0,577.7 78.0,573.6 79.0,569.4 80.0,565.3 81.0,561.1 82.0,557.1 83.0,553.1 84.0,549.1 85.0,545.3 86.0,541.7 87.0,538.1 88.0,534.8 89.0,531.7 90.0,528.7 91.0,526.0 92.0,523.5 93.0,521.3 94.0,519.4 95.0,517.8 96.0,516.4 97.0,515.3 98.0,514.6 99.0,514.1 100.0,514.0 101.0,514.2 102.0,514.7 103.0,515.5 104.0,516.6 105.0,518.0 106.0,519.7 107.0,521.6 108.0,523.9 109.0,526.4 110.0,529.1 111.0,532.1 112.0,535.2 113.0,538.6 114.0,542.1 115.0,545.8 116.0,549.7 117.0,553.6 118.0,557.6 119.0,561.7 120.0,565.8 121.0,570.0 122.0,574.1 123.0,578.2 124.0,582.3 125.0,586.3 126.0,590.1 127.0,593.9 128.0,597.5 129.0,601.0 130.0,604.3 131.0,607.3 132.0,610.2 133.0,612.8 134.0,615.2 135.0,617.3 136.0,619.2 137.0,620.7 138.0,622.0 139.0,622.9 140.0,623.6 141.0,623.9 142.0,624.0 143.0,623.7 144.0,623.1 145.0,622.2 146.0,621.0 147.0,619.5 148.0,617.7 149.0,615.7 150.0,613.3 151.0,610.8 152.0,607.9 153.0,604.9 154.0,601.7 155.0,598.2 156.0,594.6 157.0,590.9 158.0,587.0 159.0,583.1 160.0,579.0 161.0,574.9 162.0,570.8 163.0,566.7 164.0,562.5 165.0,558.4 166.0,554.4 167.0,550.4 168.0,546.6 169.0,542.9 170.0,539.3 171.0,535.9 172.0,532.7 173.0,529.7 174.0,526.9 175.0,524.3 176.0,522.1 177.0,520.0 178.0,518.3 179.0,516.8 180.0,515.7 181.0,514.8 182.0,514.3 183.0,514.0 184.0,514.1 185.0,514.5 186.0,515.2 187.0,516.2 188.0,517.5 189.0,519.1 190.0,520.9 191.0,523.1 192.0,525.5 193.0,528.2 194.0,531.0 195.0,534.2 196.0,537.5 197.0,540.9 198.0,544.6 199.0,548.4 200.0,552.3 201.0,556.3 202.0,560.3 203.0,564.4 204.0,568.6 205.0,572.7 206.0,576.9 207.0,580.9 208.0,584.9 209.0,588.9 210.0,592.7 211.0,596.3 212.0,599.9 213.0,603.2 214.0,606.3 215.0,609.3 216.0,612.0 217.0,614.5 218.0,616.7 219.0,618.6 220.0,620.2 221.0,621.6 222.0,622.7 223.0,623.4 224.0,623.9 225.0,624.0 226.0,623.8 227.0,623.3 228.0,622.5 229.0,621.4 230.0,620.0 231.0,618.3 232.0,616.4 233.0,614.1 234.0,611.6 235.0,608.9 236.0,605.9 237.0,602.8 238.0,599.4 239.0,595.9 240.0,592.2 241.0,588.3 242.0,584.4 243.0,580.4 244.0,576.3 245.0,572.2 246.0,568.0 247.0,563.9 248.0,559.8 249.0,555.7 250.0,551.7 251.0,547.9 252.0,544.1 253.0,540.5 254.0,537.0 255.0,533.7 256.0,530.7 257.0,527.8 258.0,525.2 259.0,522.8 260.0,520.7 261.0,518.8 262.0,517.3 263.0,516.0 264.0,515.1 265.0,514.4 266.0,514.1 267.0,514.0 268.0,514.3 269.0,514.9 270.0,515.8 271.0,517.0 272.0,518.5 273.0,520.3 274.0,522.3 275.0,524.7 276.0,527.2 277.0,530.1 278.0,533.1 279.0,536.3 280.0,539.8 281.0,543.4 282.0,547.1 283.0,551.0 284.0,554.9 285.0,559.0 286.0,563.1 287.0,567.2 288.0,571.3 289.0,575.5 290.0,579.6 291.0,583.6 292.0,587.6 293.0,591.4 294.0,595.1 295.0,598.7 296.0,602.1 297.0,605.3 298.0,608.3 299.0,611.1 300.0,613.7 301.0,615.9 302.0,618.0 303.0,619.7 304.0,621.2 305.0,622.3 306.0,623.2 307.0,623.7 308.0,624.0 309.0,623.9 310.0,623.5 311.0,622.8 312.0,621.8 313.0,620.5 314.0,618.9 315.0,617.1 316.0,614.9 317.0,612.5 318.0,609.8 319.0,607.0 320.0,603.8 321.0,600.5 322.0,597.1 323.0,593.4 324.0,589.6 325.0,585.7 326.0,581.7 327.0,577.7 328.0,573.6 329.0,569.4 330.0,565.3 331.0,561.1 332.0,557.1 333.0,553.1 334.0,549.1 335.0,545.3 336.0,541.7 337.0,538.1 338.0,534.8 339.0,531.7 340.0,528.7 341.0,526.0 342.0,523.5 343.0,521.3 344.0,519.4 345.0,517.8 346.0,516.4 347.0,515.3 348.0,514.6 349.0,514.1 350.0,514.0 351.0,514.2 352.0,514.7 353.0,515.5 354.0,516.6 355.0,518.0 356.0,519.7 357.0,521.6 358.0,523.9 359.0,526.4 360.0,529.1 361.0,532.1 362.0,535.2 363.0,538.6 364.0,542.1 365.0,545.8 366.0,549.7 367.0,553.6 368.0,557.6 369.0,561.7 370.0,565.8 371.0,570.0 372.0,574.1 373.0,578.2 374.0,582.3 375.0,586.3 376.0,590.1 377.0,593.9 378.0,597.5 379.0,601.0 380.0,604.3 381.0,607.3 382.0,610.2 383.0,612.8 384.0,615.2 385.0,617.3 386.0,619.2 387.0,620.7 388.0,622.0 389.0,622.9 390.0,623.6 391.0,623.9 392.0,624.0 393.0,623.7 394.0,623.1 395.0,622.2 396.0,621.0 397.0,619.5 398.0,617.7 399.0,615.7 400.0,613.3 401.0,610.8 402.0,607.9 403.0,604.9 404.0,601.7 405.0,598.2 406.0,594.6 407.0,590.9 408.0,587.0 409.0,583.1 410.0,579.0 411.0,574.9 412.0,570.8 413.0,566.7 414.0,562.5 415.0,558.4 416.0,554.4 417.0,550.4 418.0,546.6 419.0,542.9 420.0,539.3 421.0,535.9 422.0,532.7 423.0,529.7 424.0,526.9 425.0,524.3 426.0,522.1 427.0,520.0 428.0,518.3 429.0,516.8 430.0,515.7 431.0,514.8 432.0,514.3 433.0,514.0 434.0,514.1 435.0,514.5 436.0,515.2 437.0,516.2 438.0,517.5 439.0,519.1 440.0,520.9 441.0,523.1 442.0,525.5 443.0,528.2 444.0,531.0 445.0,534.2 446.0,537.5 447.0,540.9 448.0,544.6 449.0,548.4 450.0,552.3 451.0,556.3 452.0,560.3 453.0,564.4 454.0,568.6 455.0,572.7 456.0,576.9 457.0,580.9 458.0,584.9 459.0,588.9 460.0,592.7 461.0,596.3 462.0,599.9 463.0,603.2 464.0,606.3 465.0,609.3 466.0,612.0 467.0,614.5 468.0,616.7 469.0,618.6 470.0,620.2 471.0,621.6 472.0,622.7 473.0,623.4 474.0,623.9 475.0,624.0 476.0,623.8 477.0,623.3 478.0,622.5 479.0,621.4 480.0,620.0 481.0,618.3 482.0,616.4 483.0,614.1 484.0,611.6 485.0,608.9 486.0,605.9 487.0,602.8 488.0,599.4 489.0,595.9 490.0,592.2 491.0,588.3 492.0,584.4 493.0,580.4 494.0,576.3 495.0,572.2 496.0,568.0 497.0,563.9 498.0,559.8 499.0,555.7 500.0,551.7 501.0,547.9 502.0,544.1 503.0,540.5 504.0,537.0 505.0,533.7 506.0,530.7 507.0,527.8 508.0,525.2 509.0,522.8 510.0,520.7 511.0,518.8 512.0,517.3 513.0,516.0 514.0,515.1 515.0,514.4 516.0,514.1 517.0,514.0 518.0,514.3 519.0,514.9 520.0,515.8 521.0,517.0 522.0,518.5 523.0,520.3 524.0,522.3 525.0,524.7 526.0,527.2 527.0,530.1 528.0,533.1 529.0,536.3 530.0,539.8 531.0,543.4 532.0,547.1 533.0,551.0 534.0,554.9 535.0,559.0 536.0,563.1 537.0,567.2 538.0,571.3 539.0,575.5 540.0,579.6 541.0,583.6 542.0,587.6 543.0,591.4 544.0,595.1 545.0,598.7 546.0,602.1 547.0,605.3 548.0,608.3 549.0,611.1 550.0,613.7 551.0,615.9 552.0,618.0 553.0,619.7 554.0,621.2 555.0,622.3 556.0,623.2 557.0,623.7 558.0,624.0 559.0,623.9 560.0,623.5 561.0,622.8 562.0,621.8 563.0,620.5 564.0,618.9 565.0,617.1 566.0,614.9 567.0,612.5 568.0,609.8 569.0,607.0 570.0,603.8 571.0,600.5 572.0,597.1 573.0,593.4 574.0,589.6 575.0,585.7 576.0,581.7 577.0,577.7 578.0,573.6 579.0,569.4 580.0,565.3 581.0,561.1 582.0,557.1 583.0,553.1 584.0,549.1 585.0,545.3 586.0,541.7 587.0,538.1 588.0,534.8 589.0,531.7 590.0,528.7 591.0,526.0 592.0,523.5 593.0,521.3 594.0,519.4 595.0,517.8 596.0,516.4 597.0,515.3 598.0,514.6 599.0,514.1 600.0,514.0 601.0,514.2 602.0,514.7 603.0,515.5 604.0,516.6 605.0,518.0 606.0,519.7 607.0,521.6 608.0,523.9 609.0,526.4 610.0,529.1 611.0,532.1 612.0,535.2 613.0,538.6 614.0,542.1 615.0,545.8 616.0,549.7 617.0,553.6 618.0,557.6 619.0,561.7 620.0,565.8 621.0,570.0 622.0,574.1 623.0,578.2 624.0,582.3 625.0,586.3 626.0,590.1 627.0,593.9 628.0,597.5 629.0,601.0 630.0,604.3 631.0,607.3 632.0,610.2 633.0,612.8 634.0,615.2 635.0,617.3 636.0,619.2 637.0,620.7 638.0,622.0 639.0,622.9 640.0,623.6 641.0,623.9 642.0,624.0 643.0,623.7 644.0,623.1 645.0,622.2 646.0,621.0 647.0,619.5 648.0,617.7 649.0,615.7 650.0,613.3 651.0,610.8 652.0,607.9 653.0,604.9 654.0,601.7 655.0,598.2 656.0,594.6 657.0,590.9 658.0,587.0 659.0,583.1 660.0,579.0 661.0,574.9 662.0,570.8 663.0,566.7 664.0,562.5 665.0,558.4 666.0,554.4 667.0,550.4 668.0,546.6 669.0,542.9 670.0,539.3 671.0,535.9 672.0,532.7 673.0,529.7 674.0,526.9 675.0,524.3 676.0,522.1 677.0,520.0 678.0,518.3 679.0,516.8 680.0,515.7 681.0,514.8 682.0,514.3 683.0,514.0 684.0,514.1 685.0,514.5 686.0,515.2 687.0,516.2 688.0,517.5 689.0,519.1 690.0,520.9 691.0,523.1 692.0,525.5 693.0,528.2 694.0,531.0 695.0,534.2 696.0,537.5 697.0,540.9 698.0,544.6 699.0,548.4 700.0,552.3 701.0,556.3 702.0,560.3 703.0,564.4 704.0,568.6 705.0,572.7 706.0,576.9 707.0,580.9 708.0,584.9 709.0,588.9 710.0,592.7 711.0,596.3 712.0,599.9 713.0,603.2 714.0,606.3 715.0,609.3 716.0,612.0 717.0,614.5 718.0,616.7 719.0,618.6 720.0,620.2 721.0,621.6 722.0,622.7 723.0,623.4 724.0,623.9 725.0,624.0 726.0,623.8 727.0,623.3 728.0,622.5 729.0,621.4 730.0,620.0 731.0,618.3 732.0,616.4 733.0,614.1 734.0,611.6 735.0,608.9 736.0,605.9 737.0,602.8 738.0,599.4 739.0,595.9 740.0,592.2 741.0,588.3 742.0,584.4 743.0,580.4 744.0,576.3 745.0,572.2 746.0,568.0 747.0,563.9 748.0,559.8 749.0,555.7 750.0,551.7 751.0,547.9 752.0,544.1 753.0,540.5 754.0,537.0 755.0,533.7 756.0,530.7 757.0,527.8 758.0,525.2 759.0,522.8 760.0,520.7 761.0,518.8 762.0,517.3 763.0,516.0 764.0,515.1 765.0,514.4 766.0,514.1 767.0,514.0 768.0,514.3 769.0,514.9 770.0,515.8 771.0,517.0 772.0,518.5 773.0,520.3 774.0,522.3 775.0,524.7 776.0,527.2 777.0,530.1 778.0,533.1 779.0,536.3 780.0,539.8 781.0,543.4 782.0,547.1 783.0,551.0 784.0,554.9 785.0,559.0 786.0,563.1 787.0,567.2 788.0,571.3 789.0,575.5 790.0,579.6 791.0,583.6 792.0,587.6 793.0,591.4 794.0,595.1 795.0,598.7 796.0,602.1 797.0,605.3 798.0,608.3 799.0,611.1 800.0,613.7 801.0,615.9 802.0,618.0 803.0,619.7 804.0,621.2 805.0,622.3 806.0,623.2 807.0,623.7 808.0,624.0 809.0,623.9 810.0,623.5" fill="none" stroke="#00bb00" stroke-width="1.9" stroke-linejoin="round"/>
<polyline clip-path="url(#c1)" points="-1.0,670.0 0.0,670.0 1.0,670.0 2.0,669.0 3.0,669.0 4.0,669.0 5.0,669.0 6.0,669.0 7.0,669.0 8.0,669.0 9.0,669.0 10.0,669.0 11.0,669.0 12.0,669.0 13.0,669.0 14.0,669.0 15.0,669.0 16.0,669.0 17.0,669.0 18.0,668.0 19.0,668.0 20.0,668.0 21.0,668.0 22.0,668.0 23.0,668.0 24.0,668.0 25.0,668.0 26.0,668.0 27.0,668.0 28.0,668.0 29.0,668.0 30.0,668.0 31.0,668.0 32.0,668.0 33.0,668.0 34.0,668.0 35.0,668.0 36.0,668.0 37.0,668.0 38.0,668.0 39.0,668.0 40.0,668.0 41.0,669.0 42.0,669.0 43.0,669.0 44.0,669.0 45.0,669.0 46.0,669.0 47.0,669.0 48.0,669.0 49.0,670.0 50.0,670.0 51.0,670.0 52.0,670.0 53.0,670.0 54.0,671.0 55.0,671.0 56.0,671.0 57.0,672.0 58.0,672.0 59.0,672.0 60.0,673.0 61.0,673.0 62.0,673.0 63.0,674.0 64.0,674.0 65.0,674.0 66.0,675.0 67.0,675.0 68.0,676.0 69.0,676.0 70.0,677.0 71.0,677.0 72.0,678.0 73.0,678.0 74.0,679.0 75.0,679.0 76.0,680.0 77.0,680.0 78.0,681.0 79.0,681.0 80.0,682.0 81.0,682.0 82.0,683.0 83.0,683.0 84.0,684.0 85.0,684.0 86.0,685.0 87.0,685.0 88.0,686.0 89.0,686.0 90.0,687.0 91.0,687.0 92.0,688.0 93.0,688.0 94.0,688.0 95.0,689.0 96.0,689.0 97.0,690.0 98.0,690.0 99.0,690.0 100.0,691.0 101.0,691.0 102.0,692.0 103.0,692.0 104.0,692.0 105.0,693.0 106.0,693.0 107.0,693.0 108.0,693.0 109.0,694.0 110.0,694.0 111.0,694.0 112.0,694.0 113.0,695.0 114.0,695.0 115.0,695.0 116.0,695.0 117.0,695.0 118.0,695.0 119.0,696.0 120.0,696.0 121.0,696.0 122.0,696.0 123.0,696.0 124.0,696.0 125.0,696.0 126.0,696.0 127.0,697.0 128.0,697.0 129.0,697.0 130.0,697.0 131.0,697.0 132.0,697.0 133.0,697.0 134.0,697.0 135.0,697.0 136.0,697.0 137.0,697.0 138.0,697.0 139.0,697.0 140.0,697.0 141.0,697.0 142.0,697.0 143.0,698.0 144.0,698.0 145.0,698.0 146.0,698.0 147.0,698.0 148.0,698.0 149.0,698.0 150.0,698.0 151.0,698.0 152.0,698.0 153.0,698.0 154.0,698.0 155.0,698.0 156.0,698.0 157.0,698.0 158.0,698.0 159.0,698.0 160.0,698.0 161.0,698.0 162.0,698.0 163.0,698.0 164.0,698.0 165.0,698.0 166.0,697.0 167.0,697.0 168.0,697.0 169.0,697.0 170.0,697.0 171.0,697.0 172.0,697.0 173.0,697.0 174.0,696.0 175.0,696.0 176.0,696.0 177.0,696.0 178.0,696.0 179.0,695.0 180.0,695.0 181.0,695.0 182.0,694.0 183.0,694.0 184.0,694.0 185.0,693.0 186.0,693.0 187.0,693.0 188.0,692.0 189.0,692.0 190.0,692.0 191.0,691.0 192.0,691.0 193.0,690.0 194.0,690.0 195.0,689.0 196.0,689.0 197.0,688.0 198.0,688.0 199.0,687.0 200.0,687.0 201.0,686.0 202.0,686.0 203.0,685.0 204.0,685.0 205.0,684.0 206.0,684.0 207.0,683.0 208.0,683.0 209.0,682.0 210.0,682.0 211.0,681.0 212.0,681.0 213.0,680.0 214.0,680.0 215.0,679.0 216.0,679.0 217.0,678.0 218.0,678.0 219.0,678.0 220.0,677.0 221.0,677.0 222.0,676.0 223.0,676.0 224.0,676.0 225.0,675.0 226.0,675.0 227.0,674.0 228.0,674.0 229.0,674.0 230.0,673.0 231.0,673.0 232.0,673.0 233.0,673.0 234.0,672.0 235.0,672.0 236.0,672.0 237.0,672.0 238.0,671.0 239.0,671.0 240.0,671.0 241.0,671.0 242.0,671.0 243.0,671.0 244.0,670.0 245.0,670.0 246.0,670.0 247.0,670.0 248.0,670.0 249.0,670.0 250.0,670.0 251.0,670.0 252.0,669.0 253.0,669.0 254.0,669.0 255.0,669.0 256.0,669.0 257.0,669.0 258.0,669.0 259.0,669.0 260.0,669.0 261.0,669.0 262.0,669.0 263.0,669.0 264.0,669.0 265.0,669.0 266.0,669.0 267.0,669.0 268.0,668.0 269.0,668.0 270.0,668.0 271.0,668.0 272.0,668.0 273.0,668.0 274.0,668.0 275.0,668.0 276.0,668.0 277.0,668.0 278.0,668.0 279.0,668.0 280.0,668.0 281.0,668.0 282.0,668.0 283.0,668.0 284.0,668.0 285.0,668.0 286.0,668.0 287.0,668.0 288.0,668.0 289.0,668.0 290.0,668.0 291.0,669.0 292.0,669.0 293.0,669.0 294.0,669.0 295.0,669.0 296.0,669.0 297.0,669.0 298.0,669.0 299.0,670.0 300.0,670.0 301.0,670.0 302.0,670.0 303.0,670.0 304.0,671.0 305.0,671.0 306.0,671.0 307.0,672.0 308.0,672.0 309.0,672.0 310.0,673.0 311.0,673.0 312.0,673.0 313.0,674.0 314.0,674.0 315.0,674.0 316.0,675.0 317.0,675.0 318.0,676.0 319.0,676.0 320.0,677.0 321.0,677.0 322.0,678.0 323.0,678.0 324.0,679.0 325.0,679.0 326.0,680.0 327.0,680.0 328.0,681.0 329.0,681.0 330.0,682.0 331.0,682.0 332.0,683.0 333.0,683.0 334.0,684.0 335.0,684.0 336.0,685.0 337.0,685.0 338.0,686.0 339.0,686.0 340.0,687.0 341.0,687.0 342.0,688.0 343.0,688.0 344.0,688.0 345.0,689.0 346.0,689.0 347.0,690.0 348.0,690.0 349.0,690.0 350.0,691.0 351.0,691.0 352.0,692.0 353.0,692.0 354.0,692.0 355.0,693.0 356.0,693.0 357.0,693.0 358.0,693.0 359.0,694.0 360.0,694.0 361.0,694.0 362.0,694.0 363.0,695.0 364.0,695.0 365.0,695.0 366.0,695.0 367.0,695.0 368.0,695.0 369.0,696.0 370.0,696.0 371.0,696.0 372.0,696.0 373.0,696.0 374.0,696.0 375.0,696.0 376.0,696.0 377.0,697.0 378.0,697.0 379.0,697.0 380.0,697.0 381.0,697.0 382.0,697.0 383.0,697.0 384.0,697.0 385.0,697.0 386.0,697.0 387.0,697.0 388.0,697.0 389.0,697.0 390.0,697.0 391.0,697.0 392.0,697.0 393.0,698.0 394.0,698.0 395.0,698.0 396.0,698.0 397.0,698.0 398.0,698.0 399.0,698.0 400.0,698.0 401.0,698.0 402.0,698.0 403.0,698.0 404.0,698.0 405.0,698.0 406.0,698.0 407.0,698.0 408.0,698.0 409.0,698.0 410.0,698.0 411.0,698.0 412.0,698.0 413.0,698.0 414.0,698.0 415.0,698.0 416.0,697.0 417.0,697.0 418.0,697.0 419.0,697.0 420.0,697.0 421.0,697.0 422.0,697.0 423.0,697.0 424.0,696.0 425.0,696.0 426.0,696.0 427.0,696.0 428.0,696.0 429.0,695.0 430.0,695.0 431.0,695.0 432.0,694.0 433.0,694.0 434.0,694.0 435.0,693.0 436.0,693.0 437.0,693.0 438.0,692.0 439.0,692.0 440.0,692.0 441.0,691.0 442.0,691.0 443.0,690.0 444.0,690.0 445.0,689.0 446.0,689.0 447.0,688.0 448.0,688.0 449.0,687.0 450.0,687.0 451.0,686.0 452.0,686.0 453.0,685.0 454.0,685.0 455.0,684.0 456.0,684.0 457.0,683.0 458.0,683.0 459.0,682.0 460.0,682.0 461.0,681.0 462.0,681.0 463.0,680.0 464.0,680.0 465.0,679.0 466.0,679.0 467.0,678.0 468.0,678.0 469.0,678.0 470.0,677.0 471.0,677.0 472.0,676.0 473.0,676.0 474.0,676.0 475.0,675.0 476.0,675.0 477.0,674.0 478.0,674.0 479.0,674.0 480.0,673.0 481.0,673.0 482.0,673.0 483.0,673.0 484.0,672.0 485.0,672.0 486.0,672.0 487.0,672.0 488.0,671.0 489.0,671.0 490.0,671.0 491.0,671.0 492.0,671.0 493.0,671.0 494.0,670.0 495.0,670.0 496.0,670.0 497.0,670.0 498.0,670.0 499.0,670.0 500.0,670.0 501.0,670.0 502.0,669.0 503.0,669.0 504.0,669.0 505.0,669.0 506.0,669.0 507.0,669.0 508.0,669.0 509.0,669.0 510.0,669.0 511.0,669.0 512.0,669.0 513.0,669.0 514.0,669.0 515.0,669.0 516.0,669.0 517.0,669.0 518.0,668.0 519.0,668.0 520.0,668.0 521.0,668.0 522.0,668.0 523.0,668.0 524.0,668.0 525.0,668.0 526.0,668.0 527.0,668.0 528.0,668.0 529.0,668.0 530.0,668.0 531.0,668.0 532.0,668.0 533.0,668.0 534.0,668.0 535.0,668.0 536.0,668.0 537.0,668.0 538.0,668.0 539.0,668.0 540.0,668.0 541.0,669.0 542.0,669.0 543.0,669.0 544.0,669.0 545.0,669.0 546.0,669.0 547.0,669.0 548.0,669.0 549.0,670.0 550.0,670.0 551.0,670.0 552.0,670.0 553.0,670.0 554.0,671.0 555.0,671.0 556.0,671.0 557.0,672.0 558.0,672.0 559.0,672.0 560.0,673.0 561.0,673.0 562.0,673.0 563.0,674.0 564.0,674.0 565.0,674.0 566.0,675.0 567.0,675.0 568.0,676.0 569.0,676.0 570.0,677.0 571.0,677.0 572.0,678.0 573.0,678.0 574.0,679.0 575.0,679.0 576.0,680.0 577.0,680.0 578.0,681.0 579.0,681.0 580.0,682.0 581.0,682.0 582.0,683.0 583.0,683.0 584.0,684.0 585.0,684.0 586.0,685.0 587.0,685.0 588.0,686.0 589.0,686.0 590.0,687.0 591.0,687.0 592.0,688.0 593.0,688.0 594.0,688.0 595.0,689.0 596.0,689.0 597.0,690.0 598.0,690.0 599.0,690.0 600.0,691.0 601.0,691.0 602.0,692.0 603.0,692.0 604.0,692.0 605.0,693.0 606.0,693.0 607.0,693.0 608.0,693.0 609.0,694.0 610.0,694.0 611.0,694.0 612.0,694.0 613.0,695.0 614.0,695.0 615.0,695.0 616.0,695.0 617.0,695.0 618.0,695.0 619.0,696.0 620.0,696.0 621.0,696.0 622.0,696.0 623.0,696.0 624.0,696.0 625.0,696.0 626.0,696.0 627.0,697.0 628.0,697.0 629.0,697.0 630.0,697.0 631.0,697.0 632.0,697.0 633.0,697.0 634.0,697.0 635.0,697.0 636.0,697.0 637.0,697.0 638.0,697.0 639.0,697.0 640.0,697.0 641.0,697.0 642.0,697.0 643.0,698.0 644.0,698.0 645.0,698.0 646.0,698.0 647.0,698.0 648.0,698.0 649.0,698.0 650.0,698.0 651.0,698.0 652.0,698.0 653.0,698.0 654.0,698.0 655.0,698.0 656.0,698.0 657.0,698.0 658.0,698.0 659.0,698.0 660.0,698.0 661.0,698.0 662.0,698.0 663.0,698.0 664.0,698.0 665.0,698.0 666.0,697.0 667.0,697.0 668.0,697.0 669.0,697.0 670.0,697.0 671.0,697.0 672.0,697.0 673.0,697.0 674.0,696.0 675.0,696.0 676.0,696.0 677.0,696.0 678.0,696.0 679.0,695.0 680.0,695.0 681.0,695.0 682.0,694.0 683.0,694.0 684.0,694.0 685.0,693.0 686.0,693.0 687.0,693.0 688.0,692.0 689.0,692.0 690.0,692.0 691.0,691.0 692.0,691.0 693.0,690.0 694.0,690.0 695.0,689.0 696.0,689.0 697.0,688.0 698.0,688.0 699.0,687.0 700.0,687.0 701.0,686.0 702.0,686.0 703.0,685.0 704.0,685.0 705.0,684.0 706.0,684.0 707.0,683.0 708.0,683.0 709.0,682.0 710.0,682.0 711.0,681.0 712.0,681.0 713.0,680.0 714.0,680.0 715.0,679.0 716.0,679.0 717.0,678.0 718.0,678.0 719.0,678.0 720.0,677.0 721.0,677.0 722.0,676.0 723.0,676.0 724.0,676.0 725.0,675.0 726.0,675.0 727.0,674.0 728.0,674.0 729.0,674.0 730.0,673.0 731.0,673.0 732.0,673.0 733.0,673.0 734.0,672.0 735.0,672.0 736.0,672.0 737.0,672.0 738.0,671.0 739.0,671.0 740.0,671.0 741.0,671.0 742.0,671.0 743.0,671.0 744.0,670.0 745.0,670.0 746.0,670.0 747.0,670.0 748.0,670.0 749.0,670.0 750.0,670.0 751.0,670.0 752.0,669.0 753.0,669.0 754.0,669.0 755.0,669.0 756.0,669.0 757.0,669.0 758.0,669.0 759.0,669.0 760.0,669.0 761.0,669.0 762.0,669.0 763.0,669.0 764.0,669.0 765.0,669.0 766.0,669.0 767.0,669.0 768.0,668.0 769.0,668.0 770.0,668.0 771.0,668.0 772.0,668.0 773.0,668.0 774.0,668.0 775.0,668.0 776.0,668.0 777.0,668.0 778.0,668.0 779.0,668.0 780.0,668.0 781.0,668.0 782.0,668.0 783.0,668.0 784.0,668.0 785.0,668.0 786.0,668.0 787.0,668.0 788.0,668.0 789.0,668.0 790.0,668.0 791.0,669.0 792.0,669.0 793.0,669.0 794.0,669.0 795.0,669.0 796.0,669.0 797.0,669.0 798.0,669.0 799.0,670.0 800.0,670.0 801.0,670.0 802.0,670.0 803.0,670.0 804.0,671.0 805.0,671.0 806.0,671.0 807.0,672.0 808.0,672.0 809.0,672.0 810.0,673.0" fill="none" stroke="#beb600" stroke-width="1.9" stroke-linejoin="round"/>
<polyline clip-path="url(#c1)" points="-1.0,636.3 0.0,635.6 1.0,634.9 2.0,634.3 3.0,633.7 4.0,633.1 5.0,632.5 6.0,632.0 7.0,631.5 8.0,631.0 9.0,630.6 10.0,630.2 11.0,629.8 12.0,629.5 13.0,629.2 14.0,628.9 15.0,628.7 16.0,628.5 17.0,628.3 18.0,628.2 19.0,628.1 20.0,628.0 21.0,628.0 22.0,628.0 23.0,628.1 24.0,628.1 25.0,628.3 26.0,628.4 27.0,628.6 28.0,628.8 29.0,629.1 30.0,629.3 31.0,629.7 32.0,630.0 33.0,630.4 34.0,630.8 35.0,631.3 36.0,631.8 37.0,632.3 38.0,632.8 39.0,633.4 40.0,634.0 41.0,634.7 42.0,635.3 43.0,636.1 44.0,636.8 45.0,637.5 46.0,638.3 47.0,639.2 48.0,640.0 49.0,640.9 50.0,641.8 51.0,642.7 52.0,643.7 53.0,644.7 54.0,645.7 55.0,646.7 56.0,647.7 57.0,648.8 58.0,649.9 59.0,651.0 60.0,652.1 61.0,653.3 62.0,654.5 63.0,655.7 64.0,656.9 65.0,658.1 66.0,659.3 67.0,660.6 68.0,661.9 69.0,663.1 70.0,664.4 71.0,665.7 72.0,667.1 73.0,668.4 74.0,669.7 75.0,671.1 76.0,672.4 77.0,673.8 78.0,675.1 79.0,676.5 80.0,677.9 81.0,679.3 82.0,680.7 83.0,682.0 84.0,683.4 85.0,684.8 86.0,686.2 87.0,687.6 88.0,688.9 89.0,690.3 90.0,691.7 91.0,693.0 92.0,694.4 93.0,695.7 94.0,697.1 95.0,698.4 96.0,699.7 97.0,701.0 98.0,702.3 99.0,703.6 100.0,704.9 101.0,706.2 102.0,707.4 103.0,708.6 104.0,709.9 105.0,711.1 106.0,712.2 107.0,713.4 108.0,714.5 109.0,715.7 110.0,716.8 111.0,717.8 112.0,718.9 113.0,719.9 114.0,721.0 115.0,721.9 116.0,722.9 117.0,723.8 118.0,724.8 119.0,725.6 120.0,726.5 121.0,727.3 122.0,728.1 123.0,728.9 124.0,729.7 125.0,730.4 126.0,731.1 127.0,731.7 128.0,732.3 129.0,732.9 130.0,733.5 131.0,734.0 132.0,734.5 133.0,735.0 134.0,735.4 135.0,735.8 136.0,736.2 137.0,736.5 138.0,736.8 139.0,737.1 140.0,737.3 141.0,737.5 142.0,737.7 143.0,737.8 144.0,737.9 145.0,738.0 146.0,738.0 147.0,738.0 148.0,737.9 149.0,737.9 150.0,737.7 151.0,737.6 152.0,737.4 153.0,737.2 154.0,736.9 155.0,736.7 156.0,736.3 157.0,736.0 158.0,735.6 159.0,735.2 160.0,734.7 161.0,734.2 162.0,733.7 163.0,733.2 164.0,732.6 165.0,732.0 166.0,731.3 167.0,730.7 168.0,729.9 169.0,729.2 170.0,728.5 171.0,727.7 172.0,726.8 173.0,726.0 174.0,725.1 175.0,724.2 176.0,723.3 177.0,722.3 178.0,721.3 179.0,720.3 180.0,719.3 181.0,718.3 182.0,717.2 183.0,716.1 184.0,715.0 185.0,713.9 186.0,712.7 187.0,711.5 188.0,710.3 189.0,709.1 190.0,707.9 191.0,706.7 192.0,705.4 193.0,704.1 194.0,702.9 195.0,701.6 196.0,700.3 197.0,698.9 198.0,697.6 199.0,696.3 200.0,694.9 201.0,693.6 202.0,692.2 203.0,690.9 204.0,689.5 205.0,688.1 206.0,686.7 207.0,685.3 208.0,684.0 209.0,682.6 210.0,681.2 211.0,679.8 212.0,678.4 213.0,677.1 214.0,675.7 215.0,674.3 216.0,673.0 217.0,671.6 218.0,670.3 219.0,668.9 220.0,667.6 221.0,666.3 222.0,665.0 223.0,663.7 224.0,662.4 225.0,661.1 226.0,659.8 227.0,658.6 228.0,657.4 229.0,656.1 230.0,654.9 231.0,653.8 232.0,652.6 233.0,651.5 234.0,650.3 235.0,649.2 236.0,648.2 237.0,647.1 238.0,646.1 239.0,645.0 240.0,644.1 241.0,643.1 242.0,642.2 243.0,641.2 244.0,640.4 245.0,639.5 246.0,638.7 247.0,637.9 248.0,637.1 249.0,636.3 250.0,635.6 251.0,634.9 252.0,634.3 253.0,633.7 254.0,633.1 255.0,632.5 256.0,632.0 257.0,631.5 258.0,631.0 259.0,630.6 260.0,630.2 261.0,629.8 262.0,629.5 263.0,629.2 264.0,628.9 265.0,628.7 266.0,628.5 267.0,628.3 268.0,628.2 269.0,628.1 270.0,628.0 271.0,628.0 272.0,628.0 273.0,628.1 274.0,628.1 275.0,628.3 276.0,628.4 277.0,628.6 278.0,628.8 279.0,629.1 280.0,629.3 281.0,629.7 282.0,630.0 283.0,630.4 284.0,630.8 285.0,631.3 286.0,631.8 287.0,632.3 288.0,632.8 289.0,633.4 290.0,634.0 291.0,634.7 292.0,635.3 293.0,636.1 294.0,636.8 295.0,637.5 296.0,638.3 297.0,639.2 298.0,640.0 299.0,640.9 300.0,641.8 301.0,642.7 302.0,643.7 303.0,644.7 304.0,645.7 305.0,646.7 306.0,647.7 307.0,648.8 308.0,649.9 309.0,651.0 310.0,652.1 311.0,653.3 312.0,654.5 313.0,655.7 314.0,656.9 315.0,658.1 316.0,659.3 317.0,660.6 318.0,661.9 319.0,663.1 320.0,664.4 321.0,665.7 322.0,667.1 323.0,668.4 324.0,669.7 325.0,671.1 326.0,672.4 327.0,673.8 328.0,675.1 329.0,676.5 330.0,677.9 331.0,679.3 332.0,680.7 333.0,682.0 334.0,683.4 335.0,684.8 336.0,686.2 337.0,687.6 338.0,688.9 339.0,690.3 340.0,691.7 341.0,693.0 342.0,694.4 343.0,695.7 344.0,697.1 345.0,698.4 346.0,699.7 347.0,701.0 348.0,702.3 349.0,703.6 350.0,704.9 351.0,706.2 352.0,707.4 353.0,708.6 354.0,709.9 355.0,711.1 356.0,712.2 357.0,713.4 358.0,714.5 359.0,715.7 360.0,716.8 361.0,717.8 362.0,718.9 363.0,719.9 364.0,721.0 365.0,721.9 366.0,722.9 367.0,723.8 368.0,724.8 369.0,725.6 370.0,726.5 371.0,727.3 372.0,728.1 373.0,728.9 374.0,729.7 375.0,730.4 376.0,731.1 377.0,731.7 378.0,732.3 379.0,732.9 380.0,733.5 381.0,734.0 382.0,734.5 383.0,735.0 384.0,735.4 385.0,735.8 386.0,736.2 387.0,736.5 388.0,736.8 389.0,737.1 390.0,737.3 391.0,737.5 392.0,737.7 393.0,737.8 394.0,737.9 395.0,738.0 396.0,738.0 397.0,738.0 398.0,737.9 399.0,737.9 400.0,737.7 401.0,737.6 402.0,737.4 403.0,737.2 404.0,736.9 405.0,736.7 406.0,736.3 407.0,736.0 408.0,735.6 409.0,735.2 410.0,734.7 411.0,734.2 412.0,733.7 413.0,733.2 414.0,732.6 415.0,732.0 416.0,731.3 417.0,730.7 418.0,729.9 419.0,729.2 420.0,728.5 421.0,727.7 422.0,726.8 423.0,726.0 424.0,725.1 425.0,724.2 426.0,723.3 427.0,722.3 428.0,721.3 429.0,720.3 430.0,719.3 431.0,718.3 432.0,717.2 433.0,716.1 434.0,715.0 435.0,713.9 436.0,712.7 437.0,711.5 438.0,710.3 439.0,709.1 440.0,707.9 441.0,706.7 442.0,705.4 443.0,704.1 444.0,702.9 445.0,701.6 446.0,700.3 447.0,698.9 448.0,697.6 449.0,696.3 450.0,694.9 451.0,693.6 452.0,692.2 453.0,690.9 454.0,689.5 455.0,688.1 456.0,686.7 457.0,685.3 458.0,684.0 459.0,682.6 460.0,681.2 461.0,679.8 462.0,678.4 463.0,677.1 464.0,675.7 465.0,674.3 466.0,673.0 467.0,671.6 468.0,670.3 469.0,668.9 470.0,667.6 471.0,666.3 472.0,665.0 473.0,663.7 474.0,662.4 475.0,661.1 476.0,659.8 477.0,658.6 478.0,657.4 479.0,656.1 480.0,654.9 481.0,653.8 482.0,652.6 483.0,651.5 484.0,650.3 485.0,649.2 486.0,648.2 487.0,647.1 488.0,646.1 489.0,645.0 490.0,644.1 491.0,643.1 492.0,642.2 493.0,641.2 494.0,640.4 495.0,639.5 496.0,638.7 497.0,637.9 498.0,637.1 499.0,636.3 500.0,635.6 501.0,634.9 502.0,634.3 503.0,633.7 504.0,633.1 505.0,632.5 506.0,632.0 507.0,631.5 508.0,631.0 509.0,630.6 510.0,630.2 511.0,629.8 512.0,629.5 513.0,629.2 514.0,628.9 515.0,628.7 516.0,628.5 517.0,628.3 518.0,628.2 519.0,628.1 520.0,628.0 521.0,628.0 522.0,628.0 523.0,628.1 524.0,628.1 525.0,628.3 526.0,628.4 527.0,628.6 528.0,628.8 529.0,629.1 530.0,629.3 531.0,629.7 532.0,630.0 533.0,630.4 534.0,630.8 535.0,631.3 536.0,631.8 537.0,632.3 538.0,632.8 539.0,633.4 540.0,634.0 541.0,634.7 542.0,635.3 543.0,636.1 544.0,636.8 545.0,637.5 546.0,638.3 547.0,639.2 548.0,640.0 549.0,640.9 550.0,641.8 551.0,642.7 552.0,643.7 553.0,644.7 554.0,645.7 555.0,646.7 556.0,647.7 557.0,648.8 558.0,649.9 559.0,651.0 560.0,652.1 561.0,653.3 562.0,654.5 563.0,655.7 564.0,656.9 565.0,658.1 566.0,659.3 567.0,660.6 568.0,661.9 569.0,663.1 570.0,664.4 571.0,665.7 572.0,667.1 573.0,668.4 574.0,669.7 575.0,671.1 576.0,672.4 577.0,673.8 578.0,675.1 579.0,676.5 580.0,677.9 581.0,679.3 582.0,680.7 583.0,682.0 584.0,683.4 585.0,684.8 586.0,686.2 587.0,687.6 588.0,688.9 589.0,690.3 590.0,691.7 591.0,693.0 592.0,694.4 593.0,695.7 594.0,697.1 595.0,698.4 596.0,699.7 597.0,701.0 598.0,702.3 599.0,703.6 600.0,704.9 601.0,706.2 602.0,707.4 603.0,708.6 604.0,709.9 605.0,711.1 606.0,712.2 607.0,713.4 608.0,714.5 609.0,715.7 610.0,716.8 611.0,717.8 612.0,718.9 613.0,719.9 614.0,721.0 615.0,721.9 616.0,722.9 617.0,723.8 618.0,724.8 619.0,725.6 620.0,726.5 621.0,727.3 622.0,728.1 623.0,728.9 624.0,729.7 625.0,730.4 626.0,731.1 627.0,731.7 628.0,732.3 629.0,732.9 630.0,733.5 631.0,734.0 632.0,734.5 633.0,735.0 634.0,735.4 635.0,735.8 636.0,736.2 637.0,736.5 638.0,736.8 639.0,737.1 640.0,737.3 641.0,737.5 642.0,737.7 643.0,737.8 644.0,737.9 645.0,738.0 646.0,738.0 647.0,738.0 648.0,737.9 649.0,737.9 650.0,737.7 651.0,737.6 652.0,737.4 653.0,737.2 654.0,736.9 655.0,736.7 656.0,736.3 657.0,736.0 658.0,735.6 659.0,735.2 660.0,734.7 661.0,734.2 662.0,733.7 663.0,733.2 664.0,732.6 665.0,732.0 666.0,731.3 667.0,730.7 668.0,729.9 669.0,729.2 670.0,728.5 671.0,727.7 672.0,726.8 673.0,726.0 674.0,725.1 675.0,724.2 676.0,723.3 677.0,722.3 678.0,721.3 679.0,720.3 680.0,719.3 681.0,718.3 682.0,717.2 683.0,716.1 684.0,715.0 685.0,713.9 686.0,712.7 687.0,711.5 688.0,710.3 689.0,709.1 690.0,707.9 691.0,706.7 692.0,705.4 693.0,704.1 694.0,702.9 695.0,701.6 696.0,700.3 697.0,698.9 698.0,697.6 699.0,696.3 700.0,694.9 701.0,693.6 702.0,692.2 703.0,690.9 704.0,689.5 705.0,688.1 706.0,686.7 707.0,685.3 708.0,684.0 709.0,682.6 710.0,681.2 711.0,679.8 712.0,678.4 713.0,677.1 714.0,675.7 715.0,674.3 716.0,673.0 717.0,671.6 718.0,670.3 719.0,668.9 720.0,667.6 721.0,666.3 722.0,665.0 723.0,663.7 724.0,662.4 725.0,661.1 726.0,659.8 727.0,658.6 728.0,657.4 729.0,656.1 730.0,654.9 731.0,653.8 732.0,652.6 733.0,651.5 734.0,650.3 735.0,649.2 736.0,648.2 737.0,647.1 738.0,646.1 739.0,645.0 740.0,644.1 741.0,643.1 742.0,642.2 743.0,641.2 744.0,640.4 745.0,639.5 746.0,638.7 747.0,637.9 748.0,637.1 749.0,636.3 750.0,635.6 751.0,634.9 752.0,634.3 753.0,633.7 754.0,633.1 755.0,632.5 756.0,632.0 757.0,631.5 758.0,631.0 759.0,630.6 760.0,630.2 761.0,629.8 762.0,629.5 763.0,629.2 764.0,628.9 765.0,628.7 766.0,628.5 767.0,628.3 768.0,628.2 769.0,628.1 770.0,628.0 771.0,628.0 772.0,628.0 773.0,628.1 774.0,628.1 775.0,628.3 776.0,628.4 777.0,628.6 778.0,628.8 779.0,629.1 780.0,629.3 781.0,629.7 782.0,630.0 783.0,630.4 784.0,630.8 785.0,631.3 786.0,631.8 787.0,632.3 788.0,632.8 789.0,633.4 790.0,634.0 791.0,634.7 792.0,635.3 793.0,636.1 794.0,636.8 795.0,637.5 796.0,638.3 797.0,639.2 798.0,640.0 799.0,640.9 800.0,641.8 801.0,642.7 802.0,643.7 803.0,644.7 804.0,645.7 805.0,646.7 806.0,647.7 807.0,648.8 808.0,649.9 809.0,651.0 810.0,652.1" fill="none" stroke="#00bb00" stroke-width="1.9" stroke-linejoin="round"/>
<polyline clip-path="url(#c2)" points="-1.0,767.1 0.0,764.8 1.0,762.5 2.0,760.3 3.0,758.2 4.0,756.2 5.0,754.3 6.0,752.5 7.0,750.8 8.0,749.3 9.0,747.9 10.0,746.6 11.0,745.5 12.0,744.6 13.0,743.8 14.0,743.2 15.0,742.7 16.0,742.5 17.0,742.4 18.0,742.4 19.0,742.7 20.0,743.1 21.0,743.7 22.0,744.4 23.0,745.4 24.0,746.4 25.0,747.6 26.0,749.0 27.0,750.5 28.0,752.1 29.0,753.9 30.0,755.7 31.0,757.7 32.0,759.7 33.0,761.8 34.0,764.0 35.0,766.2 36.0,768.5 37.0,770.8 38.0,773.2 39.0,775.5 40.0,777.9 41.0,780.2 42.0,782.5 43.0,784.8 44.0,787.0 45.0,789.2 46.0,791.2 47.0,793.3 48.0,795.2 49.0,797.0 50.0,798.7 51.0,800.3 52.0,801.8 53.0,803.2 54.0,804.4 55.0,805.5 56.0,806.4 57.0,807.2 58.0,807.9 59.0,808.4 60.0,808.8 61.0,809.0 62.0,809.1 63.0,809.1 64.0,808.9 65.0,808.5 66.0,808.1 67.0,807.5 68.0,806.8 69.0,806.0 70.0,805.1 71.0,804.1 72.0,803.0 73.0,801.9 74.0,800.7 75.0,799.4 76.0,798.1 77.0,796.7 78.0,795.4 79.0,794.0 80.0,792.6 81.0,791.2 82.0,789.9 83.0,788.6 84.0,787.3 85.0,786.1 86.0,785.0 87.0,783.9 88.0,782.9 89.0,782.0 90.0,781.3 91.0,780.6 92.0,780.0 93.0,779.6 94.0,779.3 95.0,779.2 96.0,779.1 97.0,779.3 98.0,779.5 99.0,779.9 100.0,780.5 101.0,781.2 102.0,782.1 103.0,783.1 104.0,784.3 105.0,785.6 106.0,787.0 107.0,788.5 108.0,790.2 109.0,792.0 110.0,793.9 111.0,796.0 112.0,798.1 113.0,800.3 114.0,802.5 115.0,804.9 116.0,807.2 117.0,809.7 118.0,812.1 119.0,814.6 120.0,817.1 121.0,819.6 122.0,822.0 123.0,824.5 124.0,826.9 125.0,829.2 126.0,831.5 127.0,833.7 128.0,835.8 129.0,837.8 130.0,839.7 131.0,841.5 132.0,843.2 133.0,844.7 134.0,846.1 135.0,847.4 136.0,848.5 137.0,849.4 138.0,850.2 139.0,850.8 140.0,851.3 141.0,851.5 142.0,851.6 143.0,851.6 144.0,851.3 145.0,850.9 146.0,850.3 147.0,849.6 148.0,848.6 149.0,847.6 150.0,846.4 151.0,845.0 152.0,843.5 153.0,841.9 154.0,840.1 155.0,838.3 156.0,836.3 157.0,834.3 158.0,832.2 159.0,830.0 160.0,827.8 161.0,825.5 162.0,823.2 163.0,820.8 164.0,818.5 165.0,816.1 166.0,813.8 167.0,811.5 168.0,809.2 169.0,807.0 170.0,804.8 171.0,802.8 172.0,800.7 173.0,798.8 174.0,797.0 175.0,795.3 176.0,793.7 177.0,792.2 178.0,790.8 179.0,789.6 180.0,788.5 181.0,787.6 182.0,786.8 183.0,786.1 184.0,785.6 185.0,785.2 186.0,785.0 187.0,784.9 188.0,784.9 189.0,785.1 190.0,785.5 191.0,785.9 192.0,786.5 193.0,787.2 194.0,788.0 195.0,788.9 196.0,789.9 197.0,791.0 198.0,792.1 199.0,793.3 200.0,794.6 201.0,795.9 202.0,797.3 203.0,798.6 204.0,800.0 205.0,801.4 206.0,802.8 207.0,804.1 208.0,805.4 209.0,806.7 210.0,807.9 211.0,809.0 212.0,810.1 213.0,811.1 214.0,812.0 215.0,812.7 216.0,813.4 217.0,814.0 218.0,814.4 219.0,814.7 220.0,814.8 221.0,814.9 222.0,814.7 223.0,814.5 224.0,814.1 225.0,813.5 226.0,812.8 227.0,811.9 228.0,810.9 229.0,809.7 230.0,808.4 231.0,807.0 232.0,805.5 233.0,803.8 234.0,802.0 235.0,800.1 236.0,798.0 237.0,795.9 238.0,793.7 239.0,791.5 240.0,789.1 241.0,786.8 242.0,784.3 243.0,781.9 244.0,779.4 245.0,776.9 246.0,774.4 247.0,772.0 248.0,769.5 249.0,767.1 250.0,764.8 251.0,762.5 252.0,760.3 253.0,758.2 254.0,756.2 255.0,754.3 256.0,752.5 257.0,750.8 258.0,749.3 259.0,747.9 260.0,746.6 261.0,745.5 262.0,744.6 263.0,743.8 264.0,743.2 265.0,742.7 266.0,742.5 267.0,742.4 268.0,742.4 269.0,742.7 270.0,743.1 271.0,743.7 272.0,744.4 273.0,745.4 274.0,746.4 275.0,747.6 276.0,749.0 277.0,750.5 278.0,752.1 279.0,753.9 280.0,755.7 281.0,757.7 282.0,759.7 283.0,761.8 284.0,764.0 285.0,766.2 286.0,768.5 287.0,770.8 288.0,773.2 289.0,775.5 290.0,777.9 291.0,780.2 292.0,782.5 293.0,784.8 294.0,787.0 295.0,789.2 296.0,791.2 297.0,793.3 298.0,795.2 299.0,797.0 300.0,798.7 301.0,800.3 302.0,801.8 303.0,803.2 304.0,804.4 305.0,805.5 306.0,806.4 307.0,807.2 308.0,807.9 309.0,808.4 310.0,808.8 311.0,809.0 312.0,809.1 313.0,809.1 314.0,808.9 315.0,808.5 316.0,808.1 317.0,807.5 318.0,806.8 319.0,806.0 320.0,805.1 321.0,804.1 322.0,803.0 323.0,801.9 324.0,800.7 325.0,799.4 326.0,798.1 327.0,796.7 328.0,795.4 329.0,794.0 330.0,792.6 331.0,791.2 332.0,789.9 333.0,788.6 334.0,787.3 335.0,786.1 336.0,785.0 337.0,783.9 338.0,782.9 339.0,782.0 340.0,781.3 341.0,780.6 342.0,780.0 343.0,779.6 344.0,779.3 345.0,779.2 346.0,779.1 347.0,779.3 348.0,779.5 349.0,779.9 350.0,780.5 351.0,781.2 352.0,782.1 353.0,783.1 354.0,784.3 355.0,785.6 356.0,787.0 357.0,788.5 358.0,790.2 359.0,792.0 360.0,793.9 361.0,796.0 362.0,798.1 363.0,800.3 364.0,802.5 365.0,804.9 366.0,807.2 367.0,809.7 368.0,812.1 369.0,814.6 370.0,817.1 371.0,819.6 372.0,822.0 373.0,824.5 374.0,826.9 375.0,829.2 376.0,831.5 377.0,833.7 378.0,835.8 379.0,837.8 380.0,839.7 381.0,841.5 382.0,843.2 383.0,844.7 384.0,846.1 385.0,847.4 386.0,848.5 387.0,849.4 388.0,850.2 389.0,850.8 390.0,851.3 391.0,851.5 392.0,851.6 393.0,851.6 394.0,851.3 395.0,850.9 396.0,850.3 397.0,849.6 398.0,848.6 399.0,847.6 400.0,846.4 401.0,845.0 402.0,843.5 403.0,841.9 404.0,840.1 405.0,838.3 406.0,836.3 407.0,834.3 408.0,832.2 409.0,830.0 410.0,827.8 411.0,825.5 412.0,823.2 413.0,820.8 414.0,818.5 415.0,816.1 416.0,813.8 417.0,811.5 418.0,809.2 419.0,807.0 420.0,804.8 421.0,802.8 422.0,800.7 423.0,798.8 424.0,797.0 425.0,795.3 426.0,793.7 427.0,792.2 428.0,790.8 429.0,789.6 430.0,788.5 431.0,787.6 432.0,786.8 433.0,786.1 434.0,785.6 435.0,785.2 436.0,785.0 437.0,784.9 438.0,784.9 439.0,785.1 440.0,785.5 441.0,785.9 442.0,786.5 443.0,787.2 444.0,788.0 445.0,788.9 446.0,789.9 447.0,791.0 448.0,792.1 449.0,793.3 450.0,794.6 451.0,795.9 452.0,797.3 453.0,798.6 454.0,800.0 455.0,801.4 456.0,802.8 457.0,804.1 458.0,805.4 459.0,806.7 460.0,807.9 461.0,809.0 462.0,810.1 463.0,811.1 464.0,812.0 465.0,812.7 466.0,813.4 467.0,814.0 468.0,814.4 469.0,814.7 470.0,814.8 471.0,814.9 472.0,814.7 473.0,814.5 474.0,814.1 475.0,813.5 476.0,812.8 477.0,811.9 478.0,810.9 479.0,809.7 480.0,808.4 481.0,807.0 482.0,805.5 483.0,803.8 484.0,802.0 485.0,800.1 486.0,798.0 487.0,795.9 488.0,793.7 489.0,791.5 490.0,789.1 491.0,786.8 492.0,784.3 493.0,781.9 494.0,779.4 495.0,776.9 496.0,774.4 497.0,772.0 498.0,769.5 499.0,767.1 500.0,764.8 501.0,762.5 502.0,760.3 503.0,758.2 504.0,756.2 505.0,754.3 506.0,752.5 507.0,750.8 508.0,749.3 509.0,747.9 510.0,746.6 511.0,745.5 512.0,744.6 513.0,743.8 514.0,743.2 515.0,742.7 516.0,742.5 517.0,742.4 518.0,742.4 519.0,742.7 520.0,743.1 521.0,743.7 522.0,744.4 523.0,745.4 524.0,746.4 525.0,747.6 526.0,749.0 527.0,750.5 528.0,752.1 529.0,753.9 530.0,755.7 531.0,757.7 532.0,759.7 533.0,761.8 534.0,764.0 535.0,766.2 536.0,768.5 537.0,770.8 538.0,773.2 539.0,775.5 540.0,777.9 541.0,780.2 542.0,782.5 543.0,784.8 544.0,787.0 545.0,789.2 546.0,791.2 547.0,793.3 548.0,795.2 549.0,797.0 550.0,798.7 551.0,800.3 552.0,801.8 553.0,803.2 554.0,804.4 555.0,805.5 556.0,806.4 557.0,807.2 558.0,807.9 559.0,808.4 560.0,808.8 561.0,809.0 562.0,809.1 563.0,809.1 564.0,808.9 565.0,808.5 566.0,808.1 567.0,807.5 568.0,806.8 569.0,806.0 570.0,805.1 571.0,804.1 572.0,803.0 573.0,801.9 574.0,800.7 575.0,799.4 576.0,798.1 577.0,796.7 578.0,795.4 579.0,794.0 580.0,792.6 581.0,791.2 582.0,789.9 583.0,788.6 584.0,787.3 585.0,786.1 586.0,785.0 587.0,783.9 588.0,782.9 589.0,782.0 590.0,781.3 591.0,780.6 592.0,780.0 593.0,779.6 594.0,779.3 595.0,779.2 596.0,779.1 597.0,779.3 598.0,779.5 599.0,779.9 600.0,780.5 601.0,781.2 602.0,782.1 603.0,783.1 604.0,784.3 605.0,785.6 606.0,787.0 607.0,788.5 608.0,790.2 609.0,792.0 610.0,793.9 611.0,796.0 612.0,798.1 613.0,800.3 614.0,802.5 615.0,804.9 616.0,807.2 617.0,809.7 618.0,812.1 619.0,814.6 620.0,817.1 621.0,819.6 622.0,822.0 623.0,824.5 624.0,826.9 625.0,829.2 626.0,831.5 627.0,833.7 628.0,835.8 629.0,837.8 630.0,839.7 631.0,841.5 632.0,843.2 633.0,844.7 634.0,846.1 635.0,847.4 636.0,848.5 637.0,849.4 638.0,850.2 639.0,850.8 640.0,851.3 641.0,851.5 642.0,851.6 643.0,851.6 644.0,851.3 645.0,850.9 646.0,850.3 647.0,849.6 648.0,848.6 649.0,847.6 650.0,846.4 651.0,845.0 652.0,843.5 653.0,841.9 654.0,840.1 655.0,838.3 656.0,836.3 657.0,834.3 658.0,832.2 659.0,830.0 660.0,827.8 661.0,825.5 662.0,823.2 663.0,820.8 664.0,818.5 665.0,816.1 666.0,813.8 667.0,811.5 668.0,809.2 669.0,807.0 670.0,804.8 671.0,802.8 672.0,800.7 673.0,798.8 674.0,797.0 675.0,795.3 676.0,793.7 677.0,792.2 678.0,790.8 679.0,789.6 680.0,788.5 681.0,787.6 682.0,786.8 683.0,786.1 684.0,785.6 685.0,785.2 686.0,785.0 687.0,784.9 688.0,784.9 689.0,785.1 690.0,785.5 691.0,785.9 692.0,786.5 693.0,787.2 694.0,788.0 695.0,788.9 696.0,789.9 697.0,791.0 698.0,792.1 699.0,793.3 700.0,794.6 701.0,795.9 702.0,797.3 703.0,798.6 704.0,800.0 705.0,801.4 706.0,802.8 707.0,804.1 708.0,805.4 709.0,806.7 710.0,807.9 711.0,809.0 712.0,810.1 713.0,811.1 714.0,812.0 715.0,812.7 716.0,813.4 717.0,814.0 718.0,814.4 719.0,814.7 720.0,814.8 721.0,814.9 722.0,814.7 723.0,814.5 724.0,814.1 725.0,813.5 726.0,812.8 727.0,811.9 728.0,810.9 729.0,809.7 730.0,808.4 731.0,807.0 732.0,805.5 733.0,803.8 734.0,802.0 735.0,800.1 736.0,798.0 737.0,795.9 738.0,793.7 739.0,791.5 740.0,789.1 741.0,786.8 742.0,784.3 743.0,781.9 744.0,779.4 745.0,776.9 746.0,774.4 747.0,772.0 748.0,769.5 749.0,767.1 750.0,764.8 751.0,762.5 752.0,760.3 753.0,758.2 754.0,756.2 755.0,754.3 756.0,752.5 757.0,750.8 758.0,749.3 759.0,747.9 760.0,746.6 761.0,745.5 762.0,744.6 763.0,743.8 764.0,743.2 765.0,742.7 766.0,742.5 767.0,742.4 768.0,742.4 769.0,742.7 770.0,743.1 771.0,743.7 772.0,744.4 773.0,745.4 774.0,746.4 775.0,747.6 776.0,749.0 777.0,750.5 778.0,752.1 779.0,753.9 780.0,755.7 781.0,757.7 782.0,759.7 783.0,761.8 784.0,764.0 785.0,766.2 786.0,768.5 787.0,770.8 788.0,773.2 789.0,775.5 790.0,777.9 791.0,780.2 792.0,782.5 793.0,784.8 794.0,787.0 795.0,789.2 796.0,791.2 797.0,793.3 798.0,795.2 799.0,797.0 800.0,798.7 801.0,800.3 802.0,801.8 803.0,803.2 804.0,804.4 805.0,805.5 806.0,806.4 807.0,807.2 808.0,807.9 809.0,808.4 810.0,808.8" fill="none" stroke="#3ce600" stroke-width="2.2" stroke-linejoin="round"/>
<circle cx="18" cy="609" r="4.0" fill="none" stroke="#444" stroke-width="3.2"/><path d="M23.50 609.00 L26.30 609.00 M21.89 612.89 L23.87 614.87 M18.00 614.50 L18.00 617.30 M14.11 612.89 L12.13 614.87 M12.50 609.00 L9.70 609.00 M14.11 605.11 L12.13 603.13 M18.00 603.50 L18.00 600.70 M21.89 605.11 L23.87 603.13 " stroke="#444" stroke-width="2.5" stroke-linecap="round"/>
<circle cx="18" cy="723" r="4.0" fill="none" stroke="#444" stroke-width="3.2"/><path d="M23.50 723.00 L26.30 723.00 M21.89 726.89 L23.87 728.87 M18.00 728.50 L18.00 731.30 M14.11 726.89 L12.13 728.87 M12.50 723.00 L9.70 723.00 M14.11 719.11 L12.13 717.13 M18.00 717.50 L18.00 714.70 M21.89 719.11 L23.87 717.13 " stroke="#444" stroke-width="2.5" stroke-linecap="round"/>
<circle cx="18" cy="837" r="4.0" fill="none" stroke="#444" stroke-width="3.2"/><path d="M23.50 837.00 L26.30 837.00 M21.89 840.89 L23.87 842.87 M18.00 842.50 L18.00 845.30 M14.11 840.89 L12.13 842.87 M12.50 837.00 L9.70 837.00 M14.11 833.11 L12.13 831.13 M18.00 831.50 L18.00 828.70 M21.89 833.11 L23.87 831.13 " stroke="#444" stroke-width="2.5" stroke-linecap="round"/>
<text x="0" y="523" font-family="Liberation Sans,Arial,sans-serif" stroke="#fff" stroke-width="0.3" font-size="12" fill="#fff">Max=5 V</text><text x="0" y="637" font-family="Liberation Sans,Arial,sans-serif" stroke="#fff" stroke-width="0.3" font-size="12" fill="#fff">Max=5 V</text><text x="0" y="751" font-family="Liberation Sans,Arial,sans-serif" stroke="#fff" stroke-width="0.3" font-size="12" fill="#fff">Max=829.928 mV</text><text x="829.7" y="527.6" font-family="Liberation Sans,Arial,sans-serif" stroke="#fff" stroke-width="0.3" font-size="12" fill="#fff">t = 7.835 s</text><text x="829.7" y="542.6" font-family="Liberation Sans,Arial,sans-serif" stroke="#fff" stroke-width="0.3" font-size="12" fill="#fff">time step = 5 µs</text>
</svg>
<div class="lbl" style="top:79px">Simulation Speed</div>
<div class="lbl" style="top:123px">Current Speed</div>
<div class="lbl dis" style="top:167px">Power Brightness</div>
<div class="lbl" style="top:211px">Current Circuit:</div>
<div class="lbl" style="top:226px">LRC Circuit</div>
<div class="lbl" style="top:253px">Frequency</div>
<div class="lbl" style="top:297px">Max Voltage</div>
<div class="lbl" style="top:341px">Phase Offset</div>
<svg class="abs" style="left:0;top:0" width="1226" height="400" viewBox="0 0 1226 400"><path d="M1073.5 94.5 L1062.2 101 L1073.5 107.5" fill="none" stroke="#000" stroke-width="1.1"/><path d="M1212.5 94.5 L1223.8 101 L1212.5 107.5" fill="none" stroke="#000" stroke-width="1.1"/><rect x="1079" y="98.3" width="85.5" height="5.4" fill="#ff0000"/><rect x="1164.5" y="98.3" width="42.5" height="5.4" fill="#888888"/><rect x="1161.6" y="95.7" width="5.8" height="10.6" fill="#fff" stroke="#000" stroke-width="1.7"/><path d="M1073.5 138.5 L1062.2 145 L1073.5 151.5" fill="none" stroke="#000" stroke-width="1.1"/><path d="M1212.5 138.5 L1223.8 145 L1212.5 151.5" fill="none" stroke="#000" stroke-width="1.1"/><rect x="1079" y="142.3" width="64.5" height="5.4" fill="#ff0000"/><rect x="1143.5" y="142.3" width="63.5" height="5.4" fill="#888888"/><rect x="1140.6" y="139.7" width="5.8" height="10.6" fill="#fff" stroke="#000" stroke-width="1.7"/><path d="M1073.5 182.5 L1062.2 189 L1073.5 195.5" fill="none" stroke="#c8c8c8" stroke-width="1.1"/><path d="M1212.5 182.5 L1223.8 189 L1212.5 195.5" fill="none" stroke="#c8c8c8" stroke-width="1.1"/><rect x="1079" y="186.3" width="128" height="5.4" fill="#d0d0d0"/><path d="M1073.5 268.5 L1062.2 275 L1073.5 281.5" fill="none" stroke="#000" stroke-width="1.1"/><path d="M1212.5 268.5 L1223.8 275 L1212.5 281.5" fill="none" stroke="#000" stroke-width="1.1"/><rect x="1079" y="272.3" width="39" height="5.4" fill="#ff0000"/><rect x="1118" y="272.3" width="89" height="5.4" fill="#888888"/><rect x="1115.1" y="269.7" width="5.8" height="10.6" fill="#fff" stroke="#000" stroke-width="1.7"/><path d="M1073.5 312.5 L1062.2 319 L1073.5 325.5" fill="none" stroke="#000" stroke-width="1.1"/><path d="M1212.5 312.5 L1223.8 319 L1212.5 325.5" fill="none" stroke="#000" stroke-width="1.1"/><rect x="1079" y="316.3" width="128.5" height="5.4" fill="#ff0000"/><rect x="1207.5" y="316.3" width="-0.5" height="5.4" fill="#888888"/><rect x="1204.6" y="313.7" width="5.8" height="10.6" fill="#fff" stroke="#000" stroke-width="1.7"/><path d="M1073.5 356.5 L1062.2 363 L1073.5 369.5" fill="none" stroke="#000" stroke-width="1.1"/><path d="M1212.5 356.5 L1223.8 363 L1212.5 369.5" fill="none" stroke="#000" stroke-width="1.1"/><rect x="1079" y="360.3" width="64.5" height="5.4" fill="#ff0000"/><rect x="1143.5" y="360.3" width="63.5" height="5.4" fill="#888888"/><rect x="1140.6" y="357.7" width="5.8" height="10.6" fill="#fff" stroke="#000" stroke-width="1.7"/></svg>
</body></html>
